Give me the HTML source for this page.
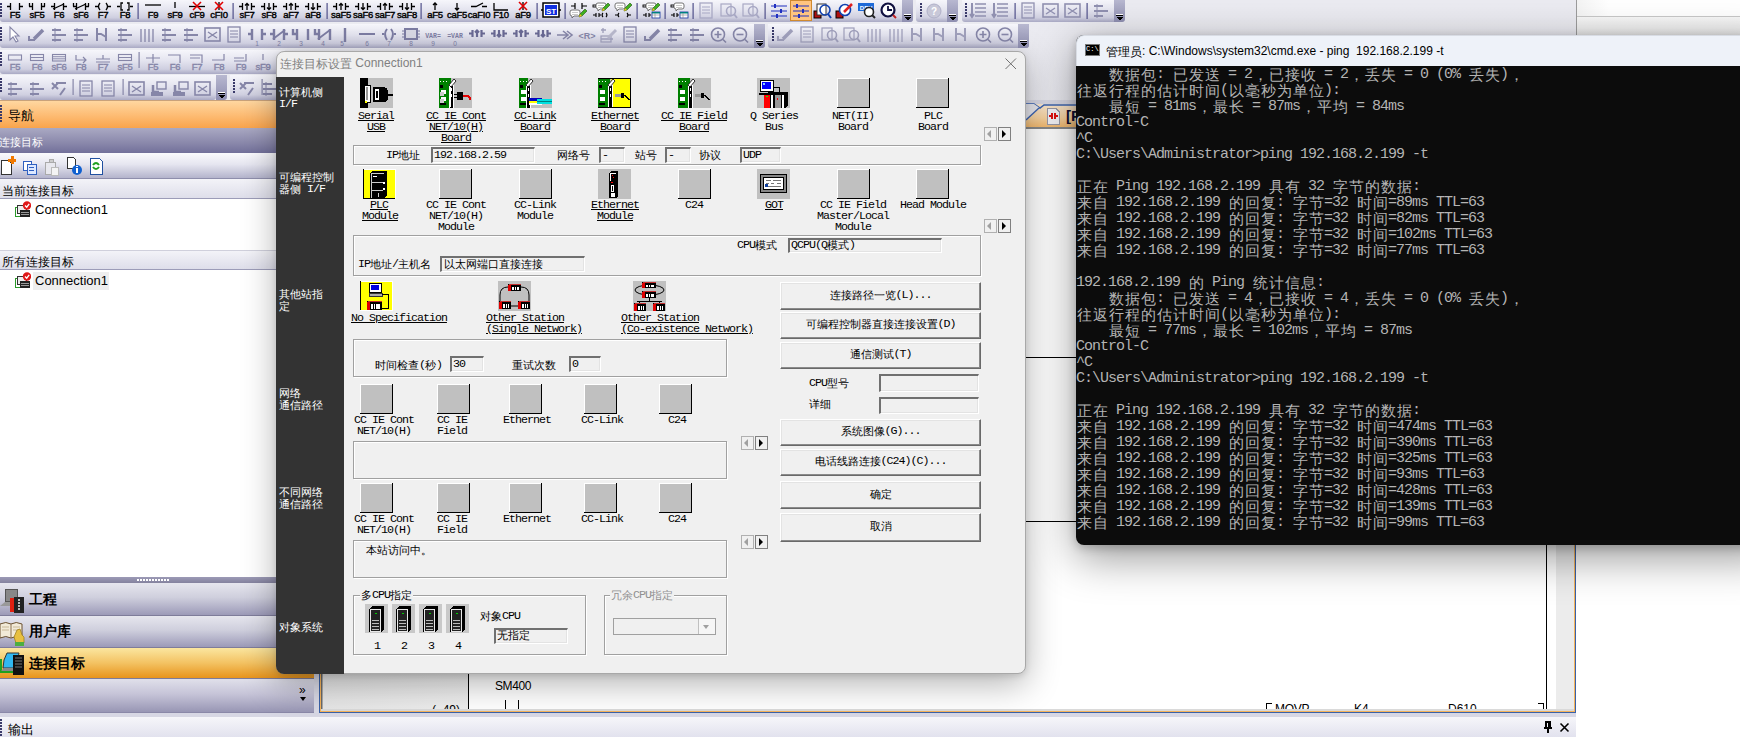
<!DOCTYPE html><html><head><meta charset="utf-8"><style>
*{margin:0;padding:0;box-sizing:border-box}
html,body{width:1740px;height:737px;overflow:hidden;background:#f4f4f6;font-family:"Liberation Sans",sans-serif}
div,span{position:absolute}
.tb{background:linear-gradient(#f6f6fb 0%,#e4e4ef 45%,#cfcfe0 80%,#a9a9c4 100%);border-radius:0 0 3px 3px}
.grip{background:linear-gradient(#b8b8d0,#8e8eb0)}
.m{font-family:"Liberation Mono",monospace}
.t{white-space:pre;line-height:11px;font-size:11.667px;letter-spacing:-1px;font-family:"Liberation Mono",monospace;color:#000}
.u{text-decoration:underline}
.gbox{border:1px solid #a0a0a0;box-shadow:1px 1px 0 #fff inset, 1px 1px 0 #fff}
.inp{background:#f0f0f0;border-top:2px solid #707070;border-left:2px solid #707070;border-right:1px solid #fff;border-bottom:1px solid #fff;box-shadow:inset -1px -1px 0 #e3e3e3}
.btn{background:#f0f0f0;border-top:1px solid #fff;border-left:1px solid #fff;border-right:1px solid #696969;border-bottom:1px solid #696969;box-shadow:inset -1px -1px 0 #8a8a8a,inset 1px 1px 0 #e3e3e3}
.ico{background:#c0c0c0;border-right:2px solid #000;border-bottom:2px solid #000}
.lbl{color:#fff;font-size:11.667px;line-height:12px;white-space:pre;font-family:"Liberation Mono",monospace;letter-spacing:-1px}
.cmd{color:#b4b4b4;font-family:"Liberation Mono",monospace;font-size:15px;line-height:16px;white-space:pre;letter-spacing:-1px}
i{font-style:normal;display:inline-block;position:relative;vertical-align:top;letter-spacing:0;text-align:center;white-space:nowrap;font-family:"Liberation Sans",sans-serif}
.k11{width:11px;font-size:11px}
.k16{width:16px;font-size:15px}
.cj{display:inline-block;position:relative;overflow:hidden;vertical-align:top;letter-spacing:1px;font-family:"Liberation Sans",sans-serif}
</style></head><body><div style="left:0px;top:0px;width:1576px;height:737px;background:linear-gradient(#ebebf1,#e6e6ee)"></div>
<div style="left:1576px;top:0px;width:164px;height:737px;background:#fff"></div>
<div style="left:1576px;top:0px;width:164px;height:17px;background:linear-gradient(90deg,#f3f3f3,#fff 20%,#fff)"></div>
<div style="left:1576px;top:16px;width:164px;height:1px;background:#c8c8c8"></div>
<div style="left:1576px;top:17px;width:164px;height:19px;background:linear-gradient(#f8f8f8,#e9e9e9)"></div>
<div style="left:1576px;top:35px;width:164px;height:1px;background:#b9b9b9"></div>
<div style="left:1576px;top:0px;width:1px;height:36px;background:#9c9c9c"></div>
<div class="tb" style="left:0px;top:0px;width:913px;height:22px;"></div>
<div class="grip" style="left:902px;top:0px;width:11px;height:22px;border-radius:0 0 3px 0"></div>
<div class="tb" style="left:916px;top:0px;width:42px;height:22px;"></div>
<div class="grip" style="left:947px;top:0px;width:11px;height:22px;border-radius:0 0 3px 0"></div>
<div class="tb" style="left:962px;top:0px;width:162px;height:22px;"></div>
<div class="grip" style="left:1114px;top:0px;width:11px;height:22px;border-radius:0 0 3px 0"></div>
<div class="tb" style="left:0px;top:24px;width:765px;height:24px;"></div>
<div class="grip" style="left:754px;top:24px;width:11px;height:24px;border-radius:0 0 3px 0"></div>
<div class="tb" style="left:768px;top:24px;width:261px;height:24px;"></div>
<div class="grip" style="left:1018px;top:24px;width:11px;height:24px;border-radius:0 0 3px 0"></div>
<div class="tb" style="left:0px;top:50px;width:285px;height:24px;"></div>
<div class="tb" style="left:0px;top:75px;width:216px;height:25px;"></div>
<div class="grip" style="left:216px;top:75px;width:11px;height:25px;border-radius:0 0 3px 0"></div>
<div class="tb" style="left:230px;top:75px;width:60px;height:25px;"></div>
<svg style="position:absolute;left:0;top:0" width="1130" height="101"><rect x="0" y="3" width="2" height="2" fill="#3a3a6a"/><rect x="0" y="6" width="2" height="2" fill="#3a3a6a"/><rect x="0" y="9" width="2" height="2" fill="#3a3a6a"/><rect x="0" y="12" width="2" height="2" fill="#3a3a6a"/><rect x="0" y="15" width="2" height="2" fill="#3a3a6a"/><path d="M7 6.5H10.5M10.5 3V10M19.5 3V10M19.5 6.5H23" stroke="#000" stroke-width="1.3" fill="none"/><text x="15" y="17.8" text-anchor="middle" font-size="9.5" font-weight="normal" fill="#000" stroke="#000" stroke-width="0.4" letter-spacing="-0.3" font-family="Liberation Sans">F5</text><path d="M29 6.5H32.5M32.5 3V10M41.5 3V10M41.5 6.5H45" stroke="#000" stroke-width="1.3" fill="none"/><path d="M29.5 3V6.5M44.5 3V6.5" stroke="#000" stroke-width="1.3" fill="none"/><text x="37" y="17.8" text-anchor="middle" font-size="9.5" font-weight="normal" fill="#000" stroke="#000" stroke-width="0.4" letter-spacing="-0.3" font-family="Liberation Sans">sF5</text><path d="M51 6.5H54.5M54.5 3V10M63.5 3V10M63.5 6.5H67" stroke="#000" stroke-width="1.3" fill="none"/><path d="M53 9L64 4" stroke="#000" stroke-width="1.3" fill="none"/><text x="59" y="17.8" text-anchor="middle" font-size="9.5" font-weight="normal" fill="#000" stroke="#000" stroke-width="0.4" letter-spacing="-0.3" font-family="Liberation Sans">F6</text><path d="M73 6.5H76.5M76.5 3V10M85.5 3V10M85.5 6.5H89" stroke="#000" stroke-width="1.3" fill="none"/><path d="M73.5 3V6.5M88.5 3V6.5" stroke="#000" stroke-width="1.3" fill="none"/><path d="M75 9L86 4" stroke="#000" stroke-width="1.3" fill="none"/><text x="81" y="17.8" text-anchor="middle" font-size="9.5" font-weight="normal" fill="#000" stroke="#000" stroke-width="0.4" letter-spacing="-0.3" font-family="Liberation Sans">sF6</text><path d="M95 6.5H98M100 3Q97 6.5 100 10M106 3Q109 6.5 106 10M108 6.5H111" stroke="#000" stroke-width="1.3" fill="none"/><text x="103" y="17.8" text-anchor="middle" font-size="9.5" font-weight="normal" fill="#000" stroke="#000" stroke-width="0.4" letter-spacing="-0.3" font-family="Liberation Sans">F7</text><path d="M117 6.5H120M123 3H121V10H123M127 3H129V10H127M130 6.5H133" stroke="#000" stroke-width="1.3" fill="none"/><text x="125" y="17.8" text-anchor="middle" font-size="9.5" font-weight="normal" fill="#000" stroke="#000" stroke-width="0.4" letter-spacing="-0.3" font-family="Liberation Sans">F8</text><rect x="137.5" y="3" width="1.2" height="16" fill="#50508a"/><path d="M145 5H161" stroke="#000" stroke-width="1.3" fill="none"/><text x="153" y="17.8" text-anchor="middle" font-size="9.5" font-weight="normal" fill="#000" stroke="#000" stroke-width="0.4" letter-spacing="-0.3" font-family="Liberation Sans">F9</text><path d="M175 2V8" stroke="#000" stroke-width="1.3" fill="none"/><text x="175" y="17.8" text-anchor="middle" font-size="9.5" font-weight="normal" fill="#000" stroke="#000" stroke-width="0.4" letter-spacing="-0.3" font-family="Liberation Sans">sF9</text><path d="M189 6.5H205" stroke="#000" stroke-width="1.3" fill="none"/><path d="M193 2L201 10M201 2L193 10" stroke="#e00000" stroke-width="1.6" fill="none"/><text x="197" y="17.8" text-anchor="middle" font-size="9.5" font-weight="normal" fill="#000" stroke="#000" stroke-width="0.4" letter-spacing="-0.3" font-family="Liberation Sans">cF9</text><path d="M219 2V10" stroke="#000" stroke-width="1.3" fill="none"/><path d="M215 2L223 10M223 2L215 10" stroke="#e00000" stroke-width="1.6" fill="none"/><text x="219" y="17.8" text-anchor="middle" font-size="9.5" font-weight="normal" fill="#000" stroke="#000" stroke-width="0.4" letter-spacing="-0.3" font-family="Liberation Sans">cFI0</text><rect x="232.5" y="3" width="1.2" height="16" fill="#50508a"/><path d="M239 6.5H242.5M242.5 3V10M251.5 3V10M251.5 6.5H255" stroke="#000" stroke-width="1.3" fill="none"/><path d="M247 10V3.5M245 5.5L247 3.5L249 5.5" stroke="#000" stroke-width="1.3" fill="none"/><text x="247" y="17.8" text-anchor="middle" font-size="9.5" font-weight="normal" fill="#000" stroke="#000" stroke-width="0.4" letter-spacing="-0.3" font-family="Liberation Sans">sF7</text><path d="M261 6.5H264.5M264.5 3V10M273.5 3V10M273.5 6.5H277" stroke="#000" stroke-width="1.3" fill="none"/><path d="M269 3V9.5M267 7.5L269 9.5L271 7.5" stroke="#000" stroke-width="1.3" fill="none"/><text x="269" y="17.8" text-anchor="middle" font-size="9.5" font-weight="normal" fill="#000" stroke="#000" stroke-width="0.4" letter-spacing="-0.3" font-family="Liberation Sans">sF8</text><path d="M283 6.5H286.5M286.5 3V10M295.5 3V10M295.5 6.5H299" stroke="#000" stroke-width="1.3" fill="none"/><path d="M291 10V3.5M289 5.5L291 3.5L293 5.5" stroke="#000" stroke-width="1.3" fill="none"/><text x="291" y="17.8" text-anchor="middle" font-size="9.5" font-weight="normal" fill="#000" stroke="#000" stroke-width="0.4" letter-spacing="-0.3" font-family="Liberation Sans">aF7</text><path d="M305 6.5H308.5M308.5 3V10M317.5 3V10M317.5 6.5H321" stroke="#000" stroke-width="1.3" fill="none"/><path d="M313 3V9.5M311 7.5L313 9.5L315 7.5" stroke="#000" stroke-width="1.3" fill="none"/><text x="313" y="17.8" text-anchor="middle" font-size="9.5" font-weight="normal" fill="#000" stroke="#000" stroke-width="0.4" letter-spacing="-0.3" font-family="Liberation Sans">aF8</text><rect x="326.5" y="3" width="1.2" height="16" fill="#50508a"/><path d="M333 6.5H336.5M336.5 3V10M345.5 3V10M345.5 6.5H349" stroke="#000" stroke-width="1.3" fill="none"/><path d="M341 10V3.5M339 5.5L341 3.5L343 5.5" stroke="#000" stroke-width="1.3" fill="none"/><text x="341" y="17.8" text-anchor="middle" font-size="9.5" font-weight="normal" fill="#000" stroke="#000" stroke-width="0.4" letter-spacing="-0.3" font-family="Liberation Sans">saF5</text><path d="M355 6.5H358.5M358.5 3V10M367.5 3V10M367.5 6.5H371" stroke="#000" stroke-width="1.3" fill="none"/><path d="M363 3V9.5M361 7.5L363 9.5L365 7.5" stroke="#000" stroke-width="1.3" fill="none"/><text x="363" y="17.8" text-anchor="middle" font-size="9.5" font-weight="normal" fill="#000" stroke="#000" stroke-width="0.4" letter-spacing="-0.3" font-family="Liberation Sans">saF6</text><path d="M377 6.5H380.5M380.5 3V10M389.5 3V10M389.5 6.5H393" stroke="#000" stroke-width="1.3" fill="none"/><path d="M385 10V3.5M383 5.5L385 3.5L387 5.5" stroke="#000" stroke-width="1.3" fill="none"/><text x="385" y="17.8" text-anchor="middle" font-size="9.5" font-weight="normal" fill="#000" stroke="#000" stroke-width="0.4" letter-spacing="-0.3" font-family="Liberation Sans">saF7</text><path d="M399 6.5H402.5M402.5 3V10M411.5 3V10M411.5 6.5H415" stroke="#000" stroke-width="1.3" fill="none"/><path d="M407 3V9.5M405 7.5L407 9.5L409 7.5" stroke="#000" stroke-width="1.3" fill="none"/><text x="407" y="17.8" text-anchor="middle" font-size="9.5" font-weight="normal" fill="#000" stroke="#000" stroke-width="0.4" letter-spacing="-0.3" font-family="Liberation Sans">saF8</text><rect x="420.5" y="3" width="1.2" height="16" fill="#50508a"/><path d="M435 10V3M433 5L435 3L437 5" stroke="#000" stroke-width="1.3" fill="none"/><text x="435" y="17.8" text-anchor="middle" font-size="9.5" font-weight="normal" fill="#000" stroke="#000" stroke-width="0.4" letter-spacing="-0.3" font-family="Liberation Sans">aF5</text><path d="M457 3V10M455 8L457 10L459 8" stroke="#000" stroke-width="1.3" fill="none"/><text x="457" y="17.8" text-anchor="middle" font-size="9.5" font-weight="normal" fill="#000" stroke="#000" stroke-width="0.4" letter-spacing="-0.3" font-family="Liberation Sans">caF5</text><path d="M471 6.5H476L483 3M482 6.5H487" stroke="#000" stroke-width="1.3" fill="none"/><text x="479" y="17.8" text-anchor="middle" font-size="9.5" font-weight="normal" fill="#000" stroke="#000" stroke-width="0.4" letter-spacing="-0.3" font-family="Liberation Sans">caFI0</text><path d="M494 3V10H508" stroke="#000" stroke-width="1.3" fill="none"/><text x="501" y="17.8" text-anchor="middle" font-size="9.5" font-weight="normal" fill="#000" stroke="#000" stroke-width="0.4" letter-spacing="-0.3" font-family="Liberation Sans">F10</text><path d="M523 2V10" stroke="#000" stroke-width="1.3" fill="none"/><path d="M519 2L527 10M527 2L519 10" stroke="#e00000" stroke-width="1.6" fill="none"/><text x="523" y="17.8" text-anchor="middle" font-size="9.5" font-weight="normal" fill="#000" stroke="#000" stroke-width="0.4" letter-spacing="-0.3" font-family="Liberation Sans">aF9</text><rect x="536.5" y="3" width="1.2" height="16" fill="#50508a"/><rect x="543" y="3" width="16" height="14" fill="#fff" stroke="#000" stroke-width="1.5"/><rect x="545" y="5" width="12" height="10" fill="#1030e0"/><text x="551" y="13.5" text-anchor="middle" font-size="8" font-weight="bold" fill="#fff" font-family="Liberation Sans">ST</text><path d="M541 10H543M559 10H561" stroke="#000" stroke-width="1.3" fill="none"/><rect x="564.5" y="3" width="1.2" height="16" fill="#50508a"/><rect x="790.5" y="0.5" width="21" height="20" fill="#ffc480" stroke="#d08a30"/><path d="M571 6H575M575 3V9M582 3V9M582 6H587" stroke="#000" stroke-width="1.2" fill="none"/><path d="M572 10H578Q580 10 580 12V14Q580 16 578 16H574L572 18V16Q570 16 570 14V12Q570 10 572 10Z" fill="#fff" stroke="#666" stroke-width="0.9"/><path d="M572 12.5H578M572 14.5H578" stroke="#bbb" stroke-width="0.8"/><path d="M579 17L580 14L585 9L587 11L582 16Z" fill="#40b020" stroke="#205010" stroke-width="0.6"/><path d="M579 17L580 14L582 16Z" fill="#f0c020"/><rect x="593" y="5" width="3" height="2" fill="none" stroke="#000" stroke-width="0.9"/><path d="M598 3H604Q606 3 606 5V7Q606 9 604 9H600L598 11V9Q596 9 596 7V5Q596 3 598 3Z" fill="#fff" stroke="#666" stroke-width="0.9"/><path d="M598 5.5H604M598 7.5H604" stroke="#bbb" stroke-width="0.8"/><path d="M602 11L603 8L608 3L610 5L605 10Z" fill="#40b020" stroke="#205010" stroke-width="0.6"/><path d="M602 11L603 8L605 10Z" fill="#f0c020"/><path d="M593 15H596M596 13V17M599 13V17M599 15H601" stroke="#000" stroke-width="1.1" fill="none"/><path d="M603 13Q601 15 603 17M606 13Q608 15 606 17" stroke="#000" stroke-width="1.1" fill="none"/><path d="M617 3H623Q625 3 625 5V7Q625 9 623 9H619L617 11V9Q615 9 615 7V5Q615 3 617 3Z" fill="#fff" stroke="#666" stroke-width="0.9"/><path d="M617 5.5H623M617 7.5H623" stroke="#bbb" stroke-width="0.8"/><path d="M624 11L625 8L630 3L632 5L627 10Z" fill="#40b020" stroke="#205010" stroke-width="0.6"/><path d="M624 11L625 8L627 10Z" fill="#f0c020"/><path d="M615 15H618M619 13Q617 15 619 17M627 13Q629 15 627 17M628 15H631" stroke="#000" stroke-width="1.1" fill="none"/><rect x="643" y="5" width="3" height="2" fill="none" stroke="#000" stroke-width="0.9"/><path d="M648 3H654Q656 3 656 5V7Q656 9 654 9H650L648 11V9Q646 9 646 7V5Q646 3 648 3Z" fill="#fff" stroke="#666" stroke-width="0.9"/><path d="M648 5.5H654M648 7.5H654" stroke="#bbb" stroke-width="0.8"/><path d="M652 11L653 8L658 3L660 5L655 10Z" fill="#40b020" stroke="#205010" stroke-width="0.6"/><path d="M652 11L653 8L655 10Z" fill="#f0c020"/><path d="M643 15H646M646 13V17M649 13V17M649 15H651" stroke="#000" stroke-width="1.1" fill="none"/><rect x="652" y="12" width="8" height="6" fill="#fff" stroke="#1030a0" stroke-width="0.8"/><rect x="652" y="12" width="8" height="1.5" fill="#008080"/><path d="M652 15H660M655 13V18" stroke="#888" stroke-width="0.6"/><rect x="671" y="5" width="3" height="2" fill="none" stroke="#000" stroke-width="0.9"/><path d="M676 3H682Q684 3 684 5V7Q684 9 682 9H678L676 11V9Q674 9 674 7V5Q674 3 676 3Z" fill="#fff" stroke="#666" stroke-width="0.9"/><path d="M676 5.5H682M676 7.5H682" stroke="#bbb" stroke-width="0.8"/><path d="M671 15H674M674 13V17M677 13V17M677 15H679" stroke="#000" stroke-width="1.1" fill="none"/><rect x="680" y="12" width="8" height="6" fill="#fff" stroke="#1030a0" stroke-width="0.8"/><rect x="680" y="12" width="8" height="1.5" fill="#008080"/><path d="M680 15H688M683 13V18" stroke="#888" stroke-width="0.6"/><rect x="636.5" y="3" width="1.2" height="16" fill="#50508a"/><rect x="664.5" y="3" width="1.2" height="16" fill="#50508a"/><rect x="692.5" y="3" width="1.2" height="16" fill="#50508a"/><rect x="700" y="3" width="12" height="15" fill="none" stroke="#a8a8c4" stroke-width="1.3"/><path d="M702 7H710M702 10H710M702 13H710" stroke="#a8a8c4" stroke-width="1" fill="none"/><rect x="721" y="4" width="10" height="12" fill="none" stroke="#a8a8c4" stroke-width="1.2"/><circle cx="731" cy="11" r="4.5" fill="none" stroke="#a8a8c4" stroke-width="1.6"/><path d="M734 14L737 18" stroke="#a8a8c4" stroke-width="2" fill="none"/><rect x="743" y="4" width="10" height="12" fill="none" stroke="#a8a8c4" stroke-width="1.2"/><circle cx="753" cy="11" r="4.5" fill="none" stroke="#a8a8c4" stroke-width="1.6"/><path d="M756 14L759 18" stroke="#a8a8c4" stroke-width="2" fill="none"/><rect x="764.5" y="3" width="1.2" height="16" fill="#50508a"/><path d="M771 6H787M771 11H787M771 16H787" stroke="#2030c0" stroke-width="1.2" fill="none"/><path d="M775 4V8M781 9V13M777 14V18" stroke="#2030c0" stroke-width="2" fill="none"/><path d="M793 6H809M793 11H809M793 16H809" stroke="#2030c0" stroke-width="1.2" fill="none"/><path d="M797 4V8M803 9V13M799 14V18" stroke="#2030c0" stroke-width="2" fill="none"/><rect x="814" y="11" width="7" height="7" fill="#b01010" stroke="#000"/><rect x="817" y="4" width="9" height="11" fill="#fff" stroke="#333"/><circle cx="825" cy="10" r="5" fill="none" stroke="#1040b0" stroke-width="1.6"/><path d="M828 14L831 18" stroke="#1040b0" stroke-width="2" fill="none"/><rect x="836" y="11" width="7" height="7" fill="#b01010" stroke="#000"/><circle cx="845" cy="10" r="5.5" fill="#fff" stroke="#1040b0" stroke-width="1.6"/><path d="M844 12L852 4" stroke="#e02020" stroke-width="2.5" fill="none"/><rect x="858" y="3" width="16" height="8" fill="#1e6ad8"/><text x="866" y="10" text-anchor="middle" font-size="6" font-weight="bold" fill="#fff" font-family="Liberation Sans">DEV</text><circle cx="869" cy="12" r="4.5" fill="#fff" stroke="#222" stroke-width="1.6"/><path d="M872 15L875 18" stroke="#222" stroke-width="2" fill="none"/><circle cx="888" cy="10" r="6.5" fill="#fff" stroke="#101040" stroke-width="2.2"/><path d="M888 6V10H892" stroke="#101040" stroke-width="1.8" fill="none"/><path d="M893 15L896 18" stroke="#c02020" stroke-width="2" fill="none"/><rect x="920" y="3" width="2" height="2" fill="#3a3a6a"/><rect x="920" y="6" width="2" height="2" fill="#3a3a6a"/><rect x="920" y="9" width="2" height="2" fill="#3a3a6a"/><rect x="920" y="12" width="2" height="2" fill="#3a3a6a"/><rect x="920" y="15" width="2" height="2" fill="#3a3a6a"/><circle cx="934" cy="11" r="7" fill="#c8c8d8" stroke="#b0b0c8"/><text x="934" y="15" text-anchor="middle" font-size="10" font-weight="bold" fill="#fff" font-family="Liberation Sans">?</text><rect x="965" y="3" width="2" height="2" fill="#3a3a6a"/><rect x="965" y="6" width="2" height="2" fill="#3a3a6a"/><rect x="965" y="9" width="2" height="2" fill="#3a3a6a"/><rect x="965" y="12" width="2" height="2" fill="#3a3a6a"/><rect x="965" y="15" width="2" height="2" fill="#3a3a6a"/><path d="M975 4H986M975 8H986M975 12H986M975 16H986" stroke="#9090b0" stroke-width="1.5" fill="none"/><path d="M972 3V17M970 14L972 17L974 14" stroke="#9090b0" stroke-width="2" fill="none"/><path d="M997 4H1008M997 8H1008M997 12H1008M997 16H1008" stroke="#9090b0" stroke-width="1.5" fill="none"/><path d="M994 3V17M992 14L994 17L996 14" stroke="#9090b0" stroke-width="2" fill="none"/><rect x="1022" y="3" width="12" height="15" fill="none" stroke="#9090b0" stroke-width="1.3"/><path d="M1024 7H1032M1024 10H1032M1024 13H1032" stroke="#9090b0" stroke-width="1" fill="none"/><rect x="1043" y="4" width="15" height="13" fill="none" stroke="#9090b0" stroke-width="1.6"/><path d="M1046 8L1055 14M1055 8L1046 14" stroke="#9090b0" stroke-width="1.4" fill="none"/><rect x="1065" y="4" width="15" height="13" fill="none" stroke="#9090b0" stroke-width="1.6"/><path d="M1068 8L1077 14M1077 8L1068 14" stroke="#9090b0" stroke-width="1.4" fill="none"/><path d="M1094 6H1103M1094 11H1108M1094 16H1103" stroke="#9090b0" stroke-width="2.2" fill="none"/><path d="M1097 4V18" stroke="#9090b0" stroke-width="1" fill="none"/><rect x="1014.5" y="3" width="1.2" height="16" fill="#50508a"/><rect x="1086.5" y="3" width="1.2" height="16" fill="#50508a"/><rect x="0" y="27" width="2" height="2" fill="#3a3a6a"/><rect x="0" y="30" width="2" height="2" fill="#3a3a6a"/><rect x="0" y="33" width="2" height="2" fill="#3a3a6a"/><rect x="0" y="36" width="2" height="2" fill="#3a3a6a"/><rect x="0" y="39" width="2" height="2" fill="#3a3a6a"/><path d="M10 27L10 40L13 37L16 42L18 41L15 36L19 36Z" fill="#fff" stroke="#8686a8" stroke-width="1.1"/><path d="M29 36V40H35" stroke="#8686a8" stroke-width="2" fill="none"/><path d="M34 39L43 30" stroke="#8686a8" stroke-width="3.5" fill="none"/><path d="M52 30H61M52 35H66M52 40H61" stroke="#8686a8" stroke-width="2.2" fill="none"/><path d="M55 28V42" stroke="#8686a8" stroke-width="1" fill="none"/><path d="M74 30H83M74 35H88M74 40H83" stroke="#8686a8" stroke-width="2.2" fill="none"/><path d="M77 28V42" stroke="#8686a8" stroke-width="1" fill="none"/><path d="M97 28V41M97 34H101L106 37M106 28V41" stroke="#8686a8" stroke-width="2" fill="none"/><path d="M118 30H127M118 35H132M118 40H127" stroke="#8686a8" stroke-width="2.2" fill="none"/><path d="M121 28V42" stroke="#8686a8" stroke-width="1" fill="none"/><path d="M141 29V42M145 29V42M149 29V42M153 29V42" stroke="#8686a8" stroke-width="1.3" fill="none"/><path d="M162 30H171M162 35H176M162 40H171" stroke="#8686a8" stroke-width="2.2" fill="none"/><path d="M165 28V42" stroke="#8686a8" stroke-width="1" fill="none"/><path d="M184 30H193M184 35H198M184 40H193" stroke="#8686a8" stroke-width="2.2" fill="none"/><path d="M187 28V42" stroke="#8686a8" stroke-width="1" fill="none"/><rect x="205" y="28" width="15" height="13" fill="none" stroke="#8686a8" stroke-width="1.6"/><path d="M208 32L217 38M217 32L208 38" stroke="#8686a8" stroke-width="1.4" fill="none"/><rect x="228" y="27" width="12" height="15" fill="none" stroke="#8686a8" stroke-width="1.3"/><path d="M230 31H238M230 34H238M230 37H238" stroke="#8686a8" stroke-width="1" fill="none"/><path d="M248 34H252M252 29V40M262 29V40M262 34H266" stroke="#7c7ca2" stroke-width="2.4" fill="none"/><path d="M270 34H274M274 29V40M284 29V40M284 34H288" stroke="#7c7ca2" stroke-width="2.4" fill="none"/><path d="M273 39L285 30" stroke="#7c7ca2" stroke-width="1.8" fill="none"/><path d="M293 29V34H297M297 29V40M308 29V40" stroke="#7c7ca2" stroke-width="2.4" fill="none"/><path d="M315 29V34H319M319 29V40M330 29V40" stroke="#7c7ca2" stroke-width="2.4" fill="none"/><path d="M318 39L330 30" stroke="#7c7ca2" stroke-width="1.8" fill="none"/><path d="M345 28V42" stroke="#7c7ca2" stroke-width="2.4" fill="none"/><path d="M359 34H375" stroke="#7c7ca2" stroke-width="2" fill="none"/><path d="M382 34H384M387 29Q383 34 387 40M391 29Q395 34 391 40M394 34H396" stroke="#7c7ca2" stroke-width="2" fill="none"/><text x="257" y="46" text-anchor="middle" font-size="6.5" fill="#7c7ca2" font-family="Liberation Sans">1</text><text x="279" y="46" text-anchor="middle" font-size="6.5" fill="#7c7ca2" font-family="Liberation Sans">2</text><text x="301" y="46" text-anchor="middle" font-size="6.5" fill="#7c7ca2" font-family="Liberation Sans">3</text><text x="323" y="46" text-anchor="middle" font-size="6.5" fill="#7c7ca2" font-family="Liberation Sans">4</text><text x="342" y="46" text-anchor="middle" font-size="6.5" fill="#7c7ca2" font-family="Liberation Sans">5</text><text x="367" y="46" text-anchor="middle" font-size="6.5" fill="#7c7ca2" font-family="Liberation Sans">6</text><text x="389" y="46" text-anchor="middle" font-size="6.5" fill="#7c7ca2" font-family="Liberation Sans">7</text><text x="411" y="46" text-anchor="middle" font-size="6.5" fill="#7c7ca2" font-family="Liberation Sans">8</text><text x="433" y="46" text-anchor="middle" font-size="6.5" fill="#7c7ca2" font-family="Liberation Sans">9</text><text x="455" y="46" text-anchor="middle" font-size="6.5" fill="#7c7ca2" font-family="Liberation Sans">0</text><rect x="405" y="29" width="12" height="10" fill="#d8d8e4" stroke="#7c7ca2" stroke-width="2"/><path d="M402 31H405M402 34H405M402 37H405M417 31H420M417 34H420M417 37H420" stroke="#7c7ca2" stroke-width="1.2" fill="none"/><text x="433" y="38" text-anchor="middle" font-size="6.5" font-weight="bold" fill="#7c7ca2" font-family="Liberation Mono">VAR=</text><text x="455" y="38" text-anchor="middle" font-size="6.5" font-weight="bold" fill="#7c7ca2" font-family="Liberation Mono">=VAR</text><path d="M469 33.5H472.5M472.5 30V37M481.5 30V37M481.5 33.5H485" stroke="#6a6a94" stroke-width="2.2" fill="none"/><path d="M477 37V30.5M475 32.5L477 30.5L479 32.5" stroke="#6a6a94" stroke-width="2.2" fill="none"/><path d="M491 33.5H494.5M494.5 30V37M503.5 30V37M503.5 33.5H507" stroke="#6a6a94" stroke-width="2.2" fill="none"/><path d="M499 30V36.5M497 34.5L499 36.5L501 34.5" stroke="#6a6a94" stroke-width="2.2" fill="none"/><path d="M513 33.5H516.5M516.5 30V37M525.5 30V37M525.5 33.5H529" stroke="#6a6a94" stroke-width="2.2" fill="none"/><path d="M521 37V30.5M519 32.5L521 30.5L523 32.5" stroke="#6a6a94" stroke-width="2.2" fill="none"/><path d="M535 33.5H538.5M538.5 30V37M547.5 30V37M547.5 33.5H551" stroke="#6a6a94" stroke-width="2.2" fill="none"/><path d="M543 30V36.5M541 34.5L543 36.5L545 34.5" stroke="#6a6a94" stroke-width="2.2" fill="none"/><path d="M557 35H567M563 31L568 35L563 39M567 31L572 35L567 39" stroke="#8686a8" stroke-width="1.6" fill="none"/><text x="587" y="39" text-anchor="middle" font-size="9" font-weight="bold" fill="#8686a8" font-family="Liberation Sans">&lt;R&gt;</text><path d="M601 30H606M603 28V33M601 39H613" stroke="#a0a0bc" stroke-width="1.3" fill="none"/><rect x="601" y="36" width="10" height="6" fill="none" stroke="#a0a0bc" stroke-width="1.2"/><path d="M608 38L616 30" stroke="#b8b8cc" stroke-width="3" fill="none"/><rect x="624" y="27" width="12" height="15" fill="none" stroke="#8686a8" stroke-width="1.3"/><path d="M626 31H634M626 34H634M626 37H634" stroke="#8686a8" stroke-width="1" fill="none"/><path d="M645 36V40H651" stroke="#8686a8" stroke-width="2" fill="none"/><path d="M650 39L659 30" stroke="#8686a8" stroke-width="3.5" fill="none"/><path d="M668 30H677M668 35H682M668 40H677" stroke="#8686a8" stroke-width="2.2" fill="none"/><path d="M671 28V42" stroke="#8686a8" stroke-width="1" fill="none"/><path d="M690 30H699M690 35H704M690 40H699" stroke="#8686a8" stroke-width="2.2" fill="none"/><path d="M693 28V42" stroke="#8686a8" stroke-width="1" fill="none"/><circle cx="718" cy="34.5" r="6.5" fill="none" stroke="#8686a8" stroke-width="1.6"/><path d="M714.5 34.5H721.5M718 31V38" stroke="#8686a8" stroke-width="1.6" fill="none"/><path d="M723 39.5L726 42.5" stroke="#8686a8" stroke-width="1.6" fill="none"/><circle cx="740" cy="34.5" r="6.5" fill="none" stroke="#8686a8" stroke-width="1.6"/><path d="M736.5 34.5H743.5" stroke="#8686a8" stroke-width="1.6" fill="none"/><path d="M745 39.5L748 42.5" stroke="#8686a8" stroke-width="1.6" fill="none"/><rect x="772" y="27" width="2" height="2" fill="#3a3a6a"/><rect x="772" y="30" width="2" height="2" fill="#3a3a6a"/><rect x="772" y="33" width="2" height="2" fill="#3a3a6a"/><rect x="772" y="36" width="2" height="2" fill="#3a3a6a"/><rect x="772" y="39" width="2" height="2" fill="#3a3a6a"/><path d="M778 36V40H784" stroke="#a0a0bc" stroke-width="2" fill="none"/><path d="M783 39L792 30" stroke="#a0a0bc" stroke-width="3.5" fill="none"/><rect x="801" y="27" width="12" height="15" fill="none" stroke="#a0a0bc" stroke-width="1.3"/><path d="M803 31H811M803 34H811M803 37H811" stroke="#a0a0bc" stroke-width="1" fill="none"/><rect x="822" y="28" width="10" height="12" fill="none" stroke="#a0a0bc" stroke-width="1.2"/><circle cx="832" cy="35" r="4.5" fill="none" stroke="#a0a0bc" stroke-width="1.6"/><path d="M835 38L838 42" stroke="#a0a0bc" stroke-width="2" fill="none"/><rect x="844" y="28" width="10" height="12" fill="none" stroke="#a0a0bc" stroke-width="1.2"/><circle cx="854" cy="35" r="4.5" fill="none" stroke="#a0a0bc" stroke-width="1.6"/><path d="M857 38L860 42" stroke="#a0a0bc" stroke-width="2" fill="none"/><path d="M868 29V42M872 29V42M876 29V42M880 29V42" stroke="#a0a0bc" stroke-width="1.3" fill="none"/><path d="M890 29V42M894 29V42M898 29V42M902 29V42" stroke="#a0a0bc" stroke-width="1.3" fill="none"/><path d="M912 28V41M912 34H916L921 37M921 28V41" stroke="#a0a0bc" stroke-width="2" fill="none"/><path d="M934 28V41M934 34H938L943 37M943 28V41" stroke="#a0a0bc" stroke-width="2" fill="none"/><path d="M956 28V41M956 34H960L965 37M965 28V41" stroke="#a0a0bc" stroke-width="2" fill="none"/><circle cx="983" cy="34.5" r="6.5" fill="none" stroke="#8686a8" stroke-width="1.6"/><path d="M979.5 34.5H986.5M983 31V38" stroke="#8686a8" stroke-width="1.6" fill="none"/><path d="M988 39.5L991 42.5" stroke="#8686a8" stroke-width="1.6" fill="none"/><circle cx="1005" cy="34.5" r="6.5" fill="none" stroke="#8686a8" stroke-width="1.6"/><path d="M1001.5 34.5H1008.5" stroke="#8686a8" stroke-width="1.6" fill="none"/><path d="M1010 39.5L1013 42.5" stroke="#8686a8" stroke-width="1.6" fill="none"/><rect x="0" y="52" width="2" height="2" fill="#3a3a6a"/><rect x="0" y="55" width="2" height="2" fill="#3a3a6a"/><rect x="0" y="58" width="2" height="2" fill="#3a3a6a"/><rect x="0" y="61" width="2" height="2" fill="#3a3a6a"/><rect x="0" y="64" width="2" height="2" fill="#3a3a6a"/><rect x="8.5" y="55" width="13" height="5" fill="none" stroke="#8686a8" stroke-width="1.1"/><text x="15" y="70.3" text-anchor="middle" font-size="9.5" font-weight="normal" fill="#8686a8" stroke="#8686a8" stroke-width="0.4" letter-spacing="-0.3" font-family="Liberation Sans">F5</text><rect x="30.5" y="54.5" width="13" height="6" fill="none" stroke="#8686a8" stroke-width="1.1"/><path d="M30.5 57.5H43.5" stroke="#8686a8" stroke-width="1" fill="none"/><text x="37" y="70.3" text-anchor="middle" font-size="9.5" font-weight="normal" fill="#8686a8" stroke="#8686a8" stroke-width="0.4" letter-spacing="-0.3" font-family="Liberation Sans">F6</text><rect x="52.5" y="54.5" width="13" height="6.5" fill="none" stroke="#8686a8" stroke-width="1.1"/><path d="M52.5 56.7H65.5M52.5 58.8H65.5" stroke="#8686a8" stroke-width="0.9" fill="none"/><text x="59" y="70.3" text-anchor="middle" font-size="9.5" font-weight="normal" fill="#8686a8" stroke="#8686a8" stroke-width="0.4" letter-spacing="-0.3" font-family="Liberation Sans">sF6</text><path d="M76 55V60H86M83 57L86 60L83 63" stroke="#8686a8" stroke-width="1.2" fill="none"/><text x="81" y="70.3" text-anchor="middle" font-size="9.5" font-weight="normal" fill="#8686a8" stroke="#8686a8" stroke-width="0.4" letter-spacing="-0.3" font-family="Liberation Sans">F8</text><path d="M103 55V59M96 59H110M96 62H110" stroke="#8686a8" stroke-width="1.2" fill="none"/><text x="103" y="70.3" text-anchor="middle" font-size="9.5" font-weight="normal" fill="#8686a8" stroke="#8686a8" stroke-width="0.4" letter-spacing="-0.3" font-family="Liberation Sans">F7</text><rect x="118.5" y="54.5" width="13" height="6" fill="none" stroke="#8686a8" stroke-width="1.1"/><path d="M118.5 57.5H131.5" stroke="#8686a8" stroke-width="1" fill="none"/><text x="125" y="70.3" text-anchor="middle" font-size="9.5" font-weight="normal" fill="#8686a8" stroke="#8686a8" stroke-width="0.4" letter-spacing="-0.3" font-family="Liberation Sans">sF5</text><path d="M146 58H160M153 54V63" stroke="#8686a8" stroke-width="1.2" fill="none"/><text x="153" y="70.3" text-anchor="middle" font-size="9.5" font-weight="normal" fill="#8686a8" stroke="#8686a8" stroke-width="0.4" letter-spacing="-0.3" font-family="Liberation Sans">F5</text><path d="M168 55H180V63" stroke="#8686a8" stroke-width="1.2" fill="none"/><text x="175" y="70.3" text-anchor="middle" font-size="9.5" font-weight="normal" fill="#8686a8" stroke="#8686a8" stroke-width="0.4" letter-spacing="-0.3" font-family="Liberation Sans">F6</text><path d="M190 55H202V63M190 58H200" stroke="#8686a8" stroke-width="1.2" fill="none"/><text x="197" y="70.3" text-anchor="middle" font-size="9.5" font-weight="normal" fill="#8686a8" stroke="#8686a8" stroke-width="0.4" letter-spacing="-0.3" font-family="Liberation Sans">F7</text><path d="M224 54V60H212" stroke="#8686a8" stroke-width="1.2" fill="none"/><text x="219" y="70.3" text-anchor="middle" font-size="9.5" font-weight="normal" fill="#8686a8" stroke="#8686a8" stroke-width="0.4" letter-spacing="-0.3" font-family="Liberation Sans">F8</text><path d="M246 54V61H234M234 58H244" stroke="#8686a8" stroke-width="1.2" fill="none"/><text x="241" y="70.3" text-anchor="middle" font-size="9.5" font-weight="normal" fill="#8686a8" stroke="#8686a8" stroke-width="0.4" letter-spacing="-0.3" font-family="Liberation Sans">F9</text><path d="M263 54V60" stroke="#8686a8" stroke-width="1.2" fill="none"/><text x="263" y="70.3" text-anchor="middle" font-size="9.5" font-weight="normal" fill="#8686a8" stroke="#8686a8" stroke-width="0.4" letter-spacing="-0.3" font-family="Liberation Sans">sF9</text><rect x="138.5" y="52" width="1.2" height="16" fill="#8686a8"/><rect x="0" y="78" width="2" height="2" fill="#3a3a6a"/><rect x="0" y="81" width="2" height="2" fill="#3a3a6a"/><rect x="0" y="84" width="2" height="2" fill="#3a3a6a"/><rect x="0" y="87" width="2" height="2" fill="#3a3a6a"/><rect x="0" y="90" width="2" height="2" fill="#3a3a6a"/><path d="M8 84H17M8 89H22M8 94H17" stroke="#8686a8" stroke-width="2.2" fill="none"/><path d="M11 82V96" stroke="#8686a8" stroke-width="1" fill="none"/><path d="M30 84H39M30 89H44M30 94H39" stroke="#8686a8" stroke-width="2.2" fill="none"/><path d="M33 82V96" stroke="#8686a8" stroke-width="1" fill="none"/><path d="M52 83L58 89M58 83L52 89M56 83H66M60 95L65 88" stroke="#8686a8" stroke-width="2" fill="none"/><rect x="80" y="81" width="12" height="15" fill="none" stroke="#8686a8" stroke-width="1.3"/><path d="M82 85H90M82 88H90M82 91H90" stroke="#8686a8" stroke-width="1" fill="none"/><rect x="102" y="81" width="12" height="15" fill="none" stroke="#8686a8" stroke-width="1.3"/><path d="M104 85H112M104 88H112M104 91H112" stroke="#8686a8" stroke-width="1" fill="none"/><rect x="129" y="82" width="15" height="13" fill="none" stroke="#8686a8" stroke-width="1.6"/><path d="M132 86L141 92M141 86L132 92" stroke="#8686a8" stroke-width="1.4" fill="none"/><rect x="157" y="82" width="9" height="7" fill="none" stroke="#8686a8" stroke-width="1.4"/><path d="M153 85V92H159" stroke="#8686a8" stroke-width="2.5" fill="none"/><rect x="151" y="92" width="12" height="4" fill="#8686a8"/><rect x="179" y="82" width="9" height="7" fill="none" stroke="#8686a8" stroke-width="1.4"/><path d="M175 85V92H181" stroke="#8686a8" stroke-width="2.5" fill="none"/><rect x="173" y="92" width="12" height="4" fill="#8686a8"/><rect x="195" y="82" width="15" height="13" fill="none" stroke="#8686a8" stroke-width="1.6"/><path d="M198 86L207 92M207 86L198 92" stroke="#8686a8" stroke-width="1.4" fill="none"/><path d="M240 83L246 89M246 83L240 89M244 83H254M248 95L253 88" stroke="#8686a8" stroke-width="2" fill="none"/><path d="M263 84H272M263 89H277M263 94H272" stroke="#8686a8" stroke-width="2.2" fill="none"/><path d="M266 82V96" stroke="#8686a8" stroke-width="1" fill="none"/><rect x="72.5" y="79" width="1.2" height="16" fill="#8686a8"/><rect x="122.5" y="79" width="1.2" height="16" fill="#8686a8"/><rect x="261.5" y="79" width="1.2" height="16" fill="#8686a8"/><rect x="233" y="79" width="2" height="2" fill="#3a3a6a"/><rect x="233" y="82" width="2" height="2" fill="#3a3a6a"/><rect x="233" y="85" width="2" height="2" fill="#3a3a6a"/><rect x="233" y="88" width="2" height="2" fill="#3a3a6a"/><rect x="233" y="91" width="2" height="2" fill="#3a3a6a"/></svg>
<svg style="position:absolute;left:904px;top:14px" width="8" height="7" shape-rendering="crispEdges"><rect x="0" y="0" width="7" height="1" fill="#fff"/><rect x="0" y="1" width="7" height="1" fill="#000"/><path d="M0 3H7L3.5 6.5Z" fill="#000"/><rect x="1" y="7" width="5" height="0" fill="#fff"/></svg>
<svg style="position:absolute;left:949px;top:14px" width="8" height="7" shape-rendering="crispEdges"><rect x="0" y="0" width="7" height="1" fill="#fff"/><rect x="0" y="1" width="7" height="1" fill="#000"/><path d="M0 3H7L3.5 6.5Z" fill="#000"/><rect x="1" y="7" width="5" height="0" fill="#fff"/></svg>
<svg style="position:absolute;left:1116px;top:14px" width="8" height="7" shape-rendering="crispEdges"><rect x="0" y="0" width="7" height="1" fill="#fff"/><rect x="0" y="1" width="7" height="1" fill="#000"/><path d="M0 3H7L3.5 6.5Z" fill="#000"/><rect x="1" y="7" width="5" height="0" fill="#fff"/></svg>
<svg style="position:absolute;left:756px;top:40px" width="8" height="7" shape-rendering="crispEdges"><rect x="0" y="0" width="7" height="1" fill="#fff"/><rect x="0" y="1" width="7" height="1" fill="#000"/><path d="M0 3H7L3.5 6.5Z" fill="#000"/><rect x="1" y="7" width="5" height="0" fill="#fff"/></svg>
<svg style="position:absolute;left:1020px;top:40px" width="8" height="7" shape-rendering="crispEdges"><rect x="0" y="0" width="7" height="1" fill="#fff"/><rect x="0" y="1" width="7" height="1" fill="#000"/><path d="M0 3H7L3.5 6.5Z" fill="#000"/><rect x="1" y="7" width="5" height="0" fill="#fff"/></svg>
<svg style="position:absolute;left:218px;top:92px" width="8" height="7" shape-rendering="crispEdges"><rect x="0" y="0" width="7" height="1" fill="#fff"/><rect x="0" y="1" width="7" height="1" fill="#000"/><path d="M0 3H7L3.5 6.5Z" fill="#000"/><rect x="1" y="7" width="5" height="0" fill="#fff"/></svg>
<div style="left:0px;top:100px;width:314px;height:28px;background:linear-gradient(#ffd7a0,#fdbb72 55%,#f9a44c);border-top:1px solid #c9a27a"></div>
<div style="left:8px;top:107px;font-size:13px;color:#000">导航</div>
<svg style="position:absolute;left:0;top:104px" width="4" height="20"><rect x="0" y="1" width="2" height="2" fill="#3a3a6a"/><rect x="0" y="4" width="2" height="2" fill="#3a3a6a"/><rect x="0" y="7" width="2" height="2" fill="#3a3a6a"/><rect x="0" y="10" width="2" height="2" fill="#3a3a6a"/><rect x="0" y="13" width="2" height="2" fill="#3a3a6a"/><rect x="0" y="16" width="2" height="2" fill="#3a3a6a"/></svg>
<div style="left:0px;top:128px;width:314px;height:25px;background:linear-gradient(#aaa9c3,#8a88ab 60%,#72709a)"></div>
<div style="left:-1px;top:135px;font-size:11px;color:#fff">连接目标</div>
<div style="left:0px;top:153px;width:314px;height:26px;background:linear-gradient(#fafafd,#e6e6f0 45%,#b4b4cc);border-bottom:1px solid #8e8eac"></div>
<svg style="position:absolute;left:0;top:155px" width="110" height="22" shape-rendering="crispEdges"><path d="M1 5H8L11 8V19H1Z" fill="#fff" stroke="#333"/><path d="M12 1V9M8 5H16" stroke="#f07800" stroke-width="3"/><rect x="23" y="6" width="8" height="9" fill="#fff" stroke="#3060c0"/><rect x="27" y="9" width="9" height="10" fill="#dde8ff" stroke="#3060c0"/><path d="M29 12H34M29 15H34" stroke="#3060c0"/><rect x="45" y="7" width="10" height="12" fill="#e8e8ee" stroke="#aaa"/><rect x="49" y="4" width="4" height="3" fill="#ccc" stroke="#aaa"/><rect x="51" y="12" width="7" height="8" fill="#f4f4f4" stroke="#bbb"/><path d="M67 2H73L75 4V13H67Z" fill="#fff" stroke="#333"/><circle cx="77" cy="15" r="5" fill="#1060d0" shape-rendering="auto"/><rect x="76" y="13" width="2" height="5" fill="#fff"/><rect x="76" y="11" width="2" height="1" fill="#fff"/><path d="M90 3H99L102 6V19H90Z" fill="#fff" stroke="#2050a0"/><path d="M93 10Q96 6 99 10M99 12Q96 16 93 12" stroke="#20a020" stroke-width="2" fill="none" shape-rendering="auto"/></svg>
<div style="left:0px;top:179px;width:314px;height:20px;background:linear-gradient(#f3f3f8,#dedeea);border-bottom:1px solid #9c9cb8"></div>
<div style="left:2px;top:183px;font-size:12px;color:#000"><i style="width:12px">当</i><i style="width:12px">前</i><i style="width:12px">连</i><i style="width:12px">接</i><i style="width:12px">目</i><i style="width:12px">标</i></div>
<div style="left:0px;top:199px;width:314px;height:51px;background:#fff"></div>
<div style="left:0px;top:250px;width:314px;height:20px;background:linear-gradient(#f3f3f8,#dedeea);border-top:1px solid #d0d0dc;border-bottom:1px solid #9c9cb8"></div>
<div style="left:2px;top:254px;font-size:12px;color:#000"><i style="width:12px">所</i><i style="width:12px">有</i><i style="width:12px">连</i><i style="width:12px">接</i><i style="width:12px">目</i><i style="width:12px">标</i></div>
<div style="left:0px;top:270px;width:314px;height:307px;background:#fff"></div>
<div style="left:33px;top:272px;width:76px;height:18px;background:#eeeeee"></div>
<svg style="position:absolute;left:15px;top:201px" width="16" height="17" shape-rendering="crispEdges"><rect x="0.5" y="6.5" width="10" height="9" fill="none" stroke="#2a9a2a"/><rect x="2.5" y="4.5" width="9" height="8" fill="#eee" stroke="#333"/><rect x="5" y="9" width="10" height="7" fill="#222"/><path d="M6 11H14M6 13H14" stroke="#999"/><circle cx="12" cy="4.5" r="4.2" fill="#e01818" shape-rendering="auto"/><path d="M10 4.5L11.7 6.2L14.2 2.8" stroke="#fff" stroke-width="1.3" fill="none" shape-rendering="auto"/></svg>
<div style="left:35px;top:202px;font-size:13px;color:#000">Connection1</div>
<svg style="position:absolute;left:15px;top:272px" width="16" height="17" shape-rendering="crispEdges"><rect x="0.5" y="6.5" width="10" height="9" fill="none" stroke="#2a9a2a"/><rect x="2.5" y="4.5" width="9" height="8" fill="#eee" stroke="#333"/><rect x="5" y="9" width="10" height="7" fill="#222"/><path d="M6 11H14M6 13H14" stroke="#999"/><circle cx="12" cy="4.5" r="4.2" fill="#e01818" shape-rendering="auto"/><path d="M10 4.5L11.7 6.2L14.2 2.8" stroke="#fff" stroke-width="1.3" fill="none" shape-rendering="auto"/></svg>
<div style="left:35px;top:273px;font-size:13px;color:#000">Connection1</div>
<div style="left:0px;top:577px;width:314px;height:6px;background:linear-gradient(#9c9ab6,#84829e)"></div>
<svg style="position:absolute;left:137px;top:578px" width="34" height="4"><rect x="0" y="1" width="2" height="2" fill="#fff"/><rect x="3" y="1" width="2" height="2" fill="#fff"/><rect x="6" y="1" width="2" height="2" fill="#fff"/><rect x="9" y="1" width="2" height="2" fill="#fff"/><rect x="12" y="1" width="2" height="2" fill="#fff"/><rect x="15" y="1" width="2" height="2" fill="#fff"/><rect x="18" y="1" width="2" height="2" fill="#fff"/><rect x="21" y="1" width="2" height="2" fill="#fff"/><rect x="24" y="1" width="2" height="2" fill="#fff"/><rect x="27" y="1" width="2" height="2" fill="#fff"/><rect x="30" y="1" width="2" height="2" fill="#fff"/></svg>
<div style="left:0px;top:583px;width:314px;height:33px;background:linear-gradient(#e6e6ee,#cfcfdd 45%,#9c9ab8);border-bottom:1px solid #7e7c9a"></div>
<div style="left:29px;top:591px;font-size:14px;font-weight:bold;color:#000">工程</div>
<div style="left:0px;top:616px;width:314px;height:32px;background:linear-gradient(#e6e6ee,#cfcfdd 45%,#9c9ab8);border-bottom:1px solid #7e7c9a"></div>
<div style="left:29px;top:623px;font-size:14px;font-weight:bold;color:#000">用户库</div>
<div style="left:0px;top:648px;width:314px;height:31px;background:linear-gradient(#fbe6a0,#f3c262 50%,#e8941c);border-bottom:1px solid #7e7c9a"></div>
<div style="left:29px;top:655px;font-size:14px;font-weight:bold;color:#000">连接目标</div>
<div style="left:0px;top:679px;width:315px;height:34px;background:linear-gradient(#e0e0ea,#c6c4d8 45%,#9896b4);border-right:1px solid #8a88a8;border-bottom:1px solid #8a88a8"></div>
<div style="left:299px;top:683px;font-size:12px;color:#000">»</div>
<div style="left:300px;top:697px;width:0;height:0;border-top:4px solid #000;border-left:3px solid transparent;border-right:3px solid transparent"></div>
<svg style="position:absolute;left:0;top:587px" width="26" height="90"><path d="M5 2H18V15H5Z" fill="#555"/><path d="M6 3H17V14H6Z" fill="#888"/><path d="M0 19L5 15H18L14 19Z" fill="#999"/><rect x="10" y="11" width="4" height="14" fill="#e02010"/><rect x="14" y="10" width="10" height="16" fill="#222"/><path d="M19 12V24" stroke="#bbb" stroke-width="2" stroke-dasharray="2 1"/><path d="M0 37Q6 34 11 37Q16 34 22 37V51Q16 48 11 51Q6 48 0 51Z" fill="#f2ead8" stroke="#6a5030"/><path d="M11 37V51" stroke="#8a7050"/><path d="M2 40H9M2 43H9M13 40H20M13 43H20" stroke="#c8b898"/><path d="M17 43L20 42L22 48L24 50V56H16L14 50Z" fill="#e8c040" stroke="#a08020" stroke-width="0.8"/><rect x="15" y="55" width="9" height="4" fill="#4cae40"/><path d="M1 72V85H14" stroke="#20a020" stroke-width="2" fill="none"/><path d="M4 73L7 66H19L16 81H3Z" fill="#30b8f0" stroke="#333"/><path d="M1 84L4 81H15L13 84Z" fill="#888"/><rect x="13" y="68" width="11" height="20" fill="#111"/><path d="M15 71H22M15 74H22M15 77H22M15 80H22" stroke="#777"/></svg>
<div style="left:314px;top:100px;width:1262px;height:617px;background:#d9d9e5"></div>
<div style="left:319px;top:129px;width:1257px;height:584px;background:#3a62a8"></div>
<div style="left:320px;top:129px;width:1255px;height:583px;background:#f5b35a"></div>
<div style="left:321px;top:129px;width:1253px;height:582px;background:#fff"></div>
<div style="left:321px;top:129px;width:147px;height:581px;background:linear-gradient(90deg,#6a6a6a 0,#6a6a6a 1px,#e6e6e6 2px,#eeeeee)"></div>
<div style="left:321px;top:709px;width:1253px;height:2px;background:#dadada"></div>
<div style="left:468px;top:129px;width:1px;height:580px;background:#000"></div>
<div style="left:1546px;top:129px;width:1px;height:580px;background:#000"></div>
<div style="left:1556px;top:129px;width:18px;height:580px;background:#ececec"></div>
<div style="left:1026px;top:104px;width:550px;height:25px;background:linear-gradient(#fbe9d2,#f8d3a0 60%,#f4bb70);border-bottom:2px solid #8a8a8a"></div>
<svg style="position:absolute;left:1026px;top:103px" width="60" height="26"><path d="M0 1H8L14 5L18 2H60" stroke="#3a64b4" stroke-width="1.5" fill="none"/><path d="M0 1H8L13 4.5L0 17Z" fill="#e8e8ef"/><path d="M13 5L0 17" stroke="#3a64b4" stroke-width="1.3"/></svg>
<svg style="position:absolute;left:1047px;top:108px" width="13" height="17" shape-rendering="crispEdges"><path d="M0.5 0.5H9L12.5 4V16.5H0.5Z" fill="#f4f4f8" stroke="#9a9aa8"/><path d="M2 8H5M8 8H11" stroke="#e01010" stroke-width="2"/><path d="M5 5V11M8 5V11" stroke="#e01010" stroke-width="1.5"/></svg>
<div style="left:1066px;top:107px;font-size:15px;font-weight:bold;color:#101030">[P</div>
<div style="left:1026px;top:357px;width:50px;height:1px;background:#000"></div>
<div style="left:1026px;top:521px;width:50px;height:1px;background:#000"></div>
<div style="left:495px;top:679px;font-size:12px;letter-spacing:-0.4px;color:#000">SM400</div>
<div style="left:505px;top:700px;width:1px;height:9px;background:#000"></div>
<div style="left:518px;top:700px;width:1px;height:9px;background:#000"></div>
<div style="left:321px;top:129px;width:1253px;height:580px;overflow:hidden"><div style="left:111px;top:574px;font-size:12px;color:#000;white-space:pre">(  49)</div><div style="left:954px;top:573px;font-size:12px;letter-spacing:-0.3px;color:#000">MOVP</div><div style="left:1033px;top:573px;font-size:12px;color:#000">K4</div><div style="left:1127px;top:573px;font-size:12px;color:#000">D610</div><div style="left:945px;top:574px;width:6px;height:8px;border-left:1px solid #000;border-top:1px solid #000"></div><div style="left:1217px;top:574px;width:6px;height:8px;border-right:1px solid #000;border-top:1px solid #000"></div></div>
<div style="left:0px;top:713px;width:1576px;height:4px;background:#d7d7e4"></div>
<div style="left:0px;top:717px;width:1576px;height:20px;background:linear-gradient(#f6f6fa,#e2e2ee)"></div>
<div style="left:8px;top:721px;font-size:13px;color:#000">输出</div>
<svg style="position:absolute;left:0;top:718px" width="4" height="19"><rect x="0" y="1" width="2" height="2" fill="#3a3a6a"/><rect x="0" y="4" width="2" height="2" fill="#3a3a6a"/><rect x="0" y="7" width="2" height="2" fill="#3a3a6a"/><rect x="0" y="10" width="2" height="2" fill="#3a3a6a"/><rect x="0" y="13" width="2" height="2" fill="#3a3a6a"/><rect x="0" y="16" width="2" height="2" fill="#3a3a6a"/></svg>
<svg style="position:absolute;left:1542px;top:721px" width="12" height="12" shape-rendering="crispEdges"><path d="M3 1H9M4 1V7M8 1V7M2 7H10M6 7V12" stroke="#000" stroke-width="1.2" fill="none"/><rect x="6" y="2" width="2" height="5" fill="#000"/></svg>
<svg style="position:absolute;left:1559px;top:722px" width="11" height="11"><path d="M1.5 1.5L9.5 9.5M9.5 1.5L1.5 9.5" stroke="#000" stroke-width="1.6"/></svg>
<div style="left:276px;top:51px;width:750px;height:623px;background:#f0f0f0;border-radius:8px;box-shadow:0 10px 34px rgba(0,0,0,0.30),0 2px 6px rgba(0,0,0,0.12);border:1px solid #a8a8a8;overflow:hidden">
</div>
<div style="left:280px;top:56px;font-size:12px;color:#808080;white-space:pre"><i style="width:12px">连</i><i style="width:12px">接</i><i style="width:12px">目</i><i style="width:12px">标</i><i style="width:12px">设</i><i style="width:12px">置</i> Connection1</div>
<svg style="position:absolute;left:1005px;top:58px" width="12" height="12"><path d="M0.5 0.5L11 11M11 0.5L0.5 11" stroke="#707070" stroke-width="1"/></svg>
<div style="left:276px;top:77px;width:68px;height:597px;background:#333;border-bottom-left-radius:8px"></div>
<div class="lbl" style="left:279px;top:86px"><i class="k11">计</i><i class="k11">算</i><i class="k11">机</i><i class="k11">侧</i>
I/F</div>
<div class="lbl" style="left:279px;top:171px"><i class="k11">可</i><i class="k11">编</i><i class="k11">程</i><i class="k11">控</i><i class="k11">制</i>
<i class="k11">器</i><i class="k11">侧</i> I/F</div>
<div class="lbl" style="left:279px;top:288px"><i class="k11">其</i><i class="k11">他</i><i class="k11">站</i><i class="k11">指</i>
<i class="k11">定</i></div>
<div class="lbl" style="left:279px;top:387px"><i class="k11">网</i><i class="k11">络</i>
<i class="k11">通</i><i class="k11">信</i><i class="k11">路</i><i class="k11">径</i></div>
<div class="lbl" style="left:279px;top:486px"><i class="k11">不</i><i class="k11">同</i><i class="k11">网</i><i class="k11">络</i>
<i class="k11">通</i><i class="k11">信</i><i class="k11">路</i><i class="k11">径</i></div>
<div class="lbl" style="left:279px;top:621px"><i class="k11">对</i><i class="k11">象</i><i class="k11">系</i><i class="k11">统</i></div>
<svg style="position:absolute;left:360px;top:78px" width="33" height="30" viewBox="0 0 33 30" shape-rendering="crispEdges"><rect width="33" height="30" fill="#c0c0c0"/><rect width="8" height="30" fill="#000"/><rect x="4" y="7" width="6" height="17" fill="#fff" stroke="#000"/><rect x="6" y="9" width="2" height="13" fill="#999"/><rect x="5" y="23" width="2" height="2" fill="#ff0"/><path d="M13 9H23Q28 9 28 14V20Q28 24 23 24H13Z" fill="#000"/><rect x="15" y="11" width="4" height="11" fill="#fff"/><rect x="16" y="13" width="2" height="7" fill="#000"/><rect x="28" y="16" width="5" height="2" fill="#000"/></svg>
<div class="t" style="left:358px;top:111px;text-decoration:underline;">Serial</div>
<div class="t" style="left:367px;top:122px;text-decoration:underline;">USB</div>
<svg style="position:absolute;left:439px;top:78px" width="33" height="30" viewBox="0 0 33 30" shape-rendering="crispEdges"><rect width="33" height="30" fill="#c0c0c0"/><rect x="0" y="0" width="12" height="30" fill="#008000"/><rect x="1" y="3" width="1" height="1" fill="#fff"/><rect x="4" y="3" width="1" height="1" fill="#fff"/><rect x="7" y="3" width="1" height="1" fill="#fff"/><rect x="1" y="7" width="3" height="3" fill="#000"/><rect x="2" y="12" width="5" height="4" fill="#fff"/><rect x="2" y="19" width="5" height="4" fill="#fff"/><rect x="1" y="25" width="6" height="2" fill="#000"/><rect x="10" y="6" width="5" height="24" fill="#fff"/><rect x="11" y="8" width="3" height="22" fill="#000"/><rect x="12" y="10" width="1" height="3" fill="#fff"/><rect x="12" y="16" width="1" height="3" fill="#fff"/><path d="M10 7L15 1L17 3L12 9Z" fill="#fff" stroke="#000" stroke-width="0.8" shape-rendering="auto"/><rect x="11" y="9" width="1" height="20" fill="#fff"/><rect x="1" y="14" width="4" height="4" fill="#ccc"/><rect x="1" y="21" width="4" height="4" fill="#ccc"/><path d="M18 14H24V22H18Z" fill="#000"/><rect x="15" y="16" width="3" height="1" fill="#000"/><rect x="15" y="19" width="3" height="1" fill="#000"/><path d="M24 18H29L31 20V22" stroke="#e00000" stroke-width="1.5" fill="none"/></svg>
<div class="t" style="left:426px;top:111px;text-decoration:underline;">CC IE Cont</div>
<div class="t" style="left:429px;top:122px;text-decoration:underline;">NET/10(H)</div>
<div class="t" style="left:441px;top:133px;text-decoration:underline;">Board</div>
<svg style="position:absolute;left:519px;top:78px" width="33" height="30" viewBox="0 0 33 30" shape-rendering="crispEdges"><rect width="33" height="30" fill="#c0c0c0"/><rect x="0" y="0" width="9" height="30" fill="#008000"/><rect x="1" y="3" width="1" height="1" fill="#fff"/><rect x="4" y="3" width="1" height="1" fill="#fff"/><rect x="7" y="3" width="1" height="1" fill="#fff"/><rect x="1" y="7" width="3" height="3" fill="#000"/><rect x="2" y="12" width="5" height="4" fill="#fff"/><rect x="2" y="19" width="5" height="4" fill="#fff"/><rect x="1" y="25" width="6" height="2" fill="#000"/><rect x="7" y="6" width="5" height="24" fill="#fff"/><rect x="8" y="8" width="3" height="22" fill="#000"/><rect x="9" y="10" width="1" height="3" fill="#fff"/><rect x="9" y="16" width="1" height="3" fill="#fff"/><path d="M7 7L12 1L14 3L9 9Z" fill="#fff" stroke="#000" stroke-width="0.8" shape-rendering="auto"/><rect x="10" y="20" width="13" height="3" fill="#0000c0"/><rect x="10" y="23" width="13" height="2" fill="#ffff00"/><rect x="10" y="25" width="13" height="2" fill="#fff"/><rect x="18" y="21" width="15" height="5" fill="#00e0e0"/><rect x="18" y="23" width="15" height="1" fill="#008080"/></svg>
<div class="t" style="left:514px;top:111px;text-decoration:underline;">CC-Link</div>
<div class="t" style="left:520px;top:122px;text-decoration:underline;">Board</div>
<svg style="position:absolute;left:598px;top:78px" width="33" height="30" viewBox="0 0 33 30" shape-rendering="crispEdges"><rect width="33" height="30" fill="#c0c0c0"/><rect x="13" width="20" height="30" fill="#ffff00"/><rect x="0" y="0" width="12" height="30" fill="#008000"/><rect x="1" y="3" width="1" height="1" fill="#fff"/><rect x="4" y="3" width="1" height="1" fill="#fff"/><rect x="7" y="3" width="1" height="1" fill="#fff"/><rect x="1" y="7" width="3" height="3" fill="#000"/><rect x="2" y="12" width="5" height="4" fill="#fff"/><rect x="2" y="19" width="5" height="4" fill="#fff"/><rect x="1" y="25" width="6" height="2" fill="#000"/><rect x="10" y="6" width="5" height="24" fill="#fff"/><rect x="11" y="8" width="3" height="22" fill="#000"/><rect x="12" y="10" width="1" height="3" fill="#fff"/><rect x="12" y="16" width="1" height="3" fill="#fff"/><path d="M10 7L15 1L17 3L12 9Z" fill="#fff" stroke="#000" stroke-width="0.8" shape-rendering="auto"/><rect x="17" y="16" width="6" height="3" fill="#999"/><rect x="23" y="15" width="3" height="5" fill="#000"/><path d="M26 17L32 22" stroke="#000" stroke-width="1.2"/><rect x="0" y="0" width="33" height="1" fill="#000"/><rect x="0" y="29" width="33" height="1" fill="#000"/><rect x="32" y="0" width="1" height="30" fill="#000"/></svg>
<div class="t" style="left:591px;top:111px;text-decoration:underline;">Ethernet</div>
<div class="t" style="left:600px;top:122px;text-decoration:underline;">Board</div>
<svg style="position:absolute;left:678px;top:78px" width="33" height="30" viewBox="0 0 33 30" shape-rendering="crispEdges"><rect width="33" height="30" fill="#c0c0c0"/><rect x="13" width="20" height="30" fill="#c0c0c0"/><rect x="0" y="0" width="12" height="30" fill="#008000"/><rect x="1" y="3" width="1" height="1" fill="#fff"/><rect x="4" y="3" width="1" height="1" fill="#fff"/><rect x="7" y="3" width="1" height="1" fill="#fff"/><rect x="1" y="7" width="3" height="3" fill="#000"/><rect x="2" y="12" width="5" height="4" fill="#fff"/><rect x="2" y="19" width="5" height="4" fill="#fff"/><rect x="1" y="25" width="6" height="2" fill="#000"/><rect x="10" y="6" width="5" height="24" fill="#fff"/><rect x="11" y="8" width="3" height="22" fill="#000"/><rect x="12" y="10" width="1" height="3" fill="#fff"/><rect x="12" y="16" width="1" height="3" fill="#fff"/><path d="M10 7L15 1L17 3L12 9Z" fill="#fff" stroke="#000" stroke-width="0.8" shape-rendering="auto"/><rect x="17" y="16" width="6" height="3" fill="#999"/><rect x="23" y="15" width="3" height="5" fill="#000"/><path d="M26 17L32 22" stroke="#000" stroke-width="1.2"/></svg>
<div class="t" style="left:661px;top:111px;text-decoration:underline;">CC IE Field</div>
<div class="t" style="left:679px;top:122px;text-decoration:underline;">Board</div>
<svg style="position:absolute;left:757px;top:78px" width="33" height="30" viewBox="0 0 33 30" shape-rendering="crispEdges"><rect width="33" height="30" fill="#c0c0c0"/><rect x="3" y="2" width="13" height="11" fill="#fff" stroke="#000"/><rect x="5" y="4" width="9" height="7" fill="#0000ff"/><rect x="6" y="5" width="2" height="2" fill="#8cf"/><rect x="2" y="15" width="10" height="2" fill="#000"/><path d="M16 9H22V16" stroke="#000" fill="none"/><path d="M8 17L11 14H31L31 27L28 30H8Z" fill="#000"/><rect x="7" y="17" width="6" height="13" fill="#ff0000"/><rect x="9" y="18" width="2" height="1" fill="#0f0"/><rect x="14" y="17" width="2" height="13" fill="#fff"/><rect x="18" y="17" width="6" height="13" fill="#999"/><rect x="20" y="20" width="1" height="2" fill="#f00"/><rect x="25" y="17" width="2" height="13" fill="#fff"/></svg>
<div class="t" style="left:750px;top:111px;">Q Series</div>
<div class="t" style="left:765px;top:122px;">Bus</div>
<svg style="position:absolute;left:837px;top:78px" width="33" height="30" viewBox="0 0 33 30" shape-rendering="crispEdges"><rect width="33" height="30" fill="#c0c0c0"/><rect width="33" height="1" fill="#fff"/><rect width="1" height="30" fill="#fff"/><rect x="32" width="1" height="30" fill="#000"/><rect y="29" width="33" height="1" fill="#000"/></svg>
<div class="t" style="left:832px;top:111px;">NET(II)</div>
<div class="t" style="left:838px;top:122px;">Board</div>
<svg style="position:absolute;left:916px;top:78px" width="33" height="30" viewBox="0 0 33 30" shape-rendering="crispEdges"><rect width="33" height="30" fill="#c0c0c0"/><rect width="33" height="1" fill="#fff"/><rect width="1" height="30" fill="#fff"/><rect x="32" width="1" height="30" fill="#000"/><rect y="29" width="33" height="1" fill="#000"/></svg>
<div class="t" style="left:924px;top:111px;">PLC</div>
<div class="t" style="left:918px;top:122px;">Board</div>
<svg style="position:absolute;left:363px;top:169px" width="33" height="30" viewBox="0 0 33 30" shape-rendering="crispEdges"><rect width="33" height="30" fill="#ffff00"/><rect width="33" height="1" fill="#fff"/><rect width="1" height="30" fill="#000"/><rect y="29" width="33" height="1" fill="#000"/><rect x="32" width="1" height="30" fill="#fff"/><path d="M7 4L9 2H24V26L21 29H7Z" fill="#000"/><path d="M8 4V29M8 4H21" stroke="#ccc" fill="none"/><rect x="10" y="7" width="4" height="1" fill="#fff"/><path d="M8 13H20M8 21H20" stroke="#ccc"/><rect x="20" y="13" width="2" height="2" fill="#fff"/><rect x="20" y="19" width="2" height="2" fill="#fff"/><rect x="15" y="24" width="1" height="4" fill="#ccc"/></svg>
<div class="t" style="left:370px;top:200px;text-decoration:underline;">PLC</div>
<div class="t" style="left:362px;top:211px;text-decoration:underline;">Module</div>
<svg style="position:absolute;left:439px;top:169px" width="33" height="30" viewBox="0 0 33 30" shape-rendering="crispEdges"><rect width="33" height="30" fill="#c0c0c0"/><rect width="33" height="1" fill="#fff"/><rect width="1" height="30" fill="#fff"/><rect x="32" width="1" height="30" fill="#000"/><rect y="29" width="33" height="1" fill="#000"/></svg>
<div class="t" style="left:426px;top:200px;">CC IE Cont</div>
<div class="t" style="left:429px;top:211px;">NET/10(H)</div>
<div class="t" style="left:438px;top:222px;">Module</div>
<svg style="position:absolute;left:519px;top:169px" width="33" height="30" viewBox="0 0 33 30" shape-rendering="crispEdges"><rect width="33" height="30" fill="#c0c0c0"/><rect width="33" height="1" fill="#fff"/><rect width="1" height="30" fill="#fff"/><rect x="32" width="1" height="30" fill="#000"/><rect y="29" width="33" height="1" fill="#000"/></svg>
<div class="t" style="left:514px;top:200px;">CC-Link</div>
<div class="t" style="left:517px;top:211px;">Module</div>
<svg style="position:absolute;left:598px;top:169px" width="33" height="30" viewBox="0 0 33 30" shape-rendering="crispEdges"><rect width="33" height="30" fill="#c0c0c0"/><path d="M11 4L13 2H20V27L18 29H11Z" fill="#000"/><path d="M12 4H18M12 4V12" stroke="#fff" fill="none"/><rect x="14" y="6" width="1" height="1" fill="#f00"/><rect x="15" y="8" width="1" height="1" fill="#f00"/><rect x="13" y="13" width="2" height="1" fill="#f00"/><rect x="13" y="16" width="3" height="7" fill="#fff"/><rect x="14" y="17" width="1" height="5" fill="#000"/><rect x="13" y="24" width="4" height="4" fill="#fff"/></svg>
<div class="t" style="left:591px;top:200px;text-decoration:underline;">Ethernet</div>
<div class="t" style="left:597px;top:211px;text-decoration:underline;">Module</div>
<svg style="position:absolute;left:678px;top:169px" width="33" height="30" viewBox="0 0 33 30" shape-rendering="crispEdges"><rect width="33" height="30" fill="#c0c0c0"/><rect width="33" height="1" fill="#fff"/><rect width="1" height="30" fill="#fff"/><rect x="32" width="1" height="30" fill="#000"/><rect y="29" width="33" height="1" fill="#000"/></svg>
<div class="t" style="left:685px;top:200px;">C24</div>
<svg style="position:absolute;left:757px;top:169px" width="33" height="30" viewBox="0 0 33 30" shape-rendering="crispEdges"><rect width="33" height="30" fill="#c0c0c0"/><rect x="3" y="5" width="27" height="19" fill="#000"/><rect x="4" y="6" width="25" height="17" fill="#888"/><rect x="6" y="8" width="21" height="13" fill="#000"/><rect x="7" y="9" width="19" height="11" fill="#fff"/><path d="M9 11H14M16 11H24M9 14H12M14 14H17M20 14H24M9 17H24" stroke="#777"/><rect x="8" y="15" width="3" height="3" fill="#1040a0"/></svg>
<div class="t" style="left:765px;top:200px;text-decoration:underline;">GOT</div>
<svg style="position:absolute;left:837px;top:169px" width="33" height="30" viewBox="0 0 33 30" shape-rendering="crispEdges"><rect width="33" height="30" fill="#c0c0c0"/><rect width="33" height="1" fill="#fff"/><rect width="1" height="30" fill="#fff"/><rect x="32" width="1" height="30" fill="#000"/><rect y="29" width="33" height="1" fill="#000"/></svg>
<div class="t" style="left:820px;top:200px;">CC IE Field</div>
<div class="t" style="left:817px;top:211px;">Master/Local</div>
<div class="t" style="left:835px;top:222px;">Module</div>
<svg style="position:absolute;left:916px;top:169px" width="33" height="30" viewBox="0 0 33 30" shape-rendering="crispEdges"><rect width="33" height="30" fill="#c0c0c0"/><rect width="33" height="1" fill="#fff"/><rect width="1" height="30" fill="#fff"/><rect x="32" width="1" height="30" fill="#000"/><rect y="29" width="33" height="1" fill="#000"/></svg>
<div class="t" style="left:900px;top:200px;">Head Module</div>
<div style="left:984px;top:127px;width:13px;height:14px;background:#f0f0f0;border:1px solid #b0b0b0"></div>
<div style="left:998px;top:127px;width:13px;height:14px;background:#f0f0f0;border:1px solid #808080"></div>
<div style="left:987px;top:130px;width:0;height:0;border-right:4px solid #a0a0a0;border-top:4px solid transparent;border-bottom:4px solid transparent"></div>
<div style="left:1002px;top:130px;width:0;height:0;border-left:4px solid #000;border-top:4px solid transparent;border-bottom:4px solid transparent"></div>
<div style="left:984px;top:219px;width:13px;height:14px;background:#f0f0f0;border:1px solid #b0b0b0"></div>
<div style="left:998px;top:219px;width:13px;height:14px;background:#f0f0f0;border:1px solid #808080"></div>
<div style="left:987px;top:222px;width:0;height:0;border-right:4px solid #a0a0a0;border-top:4px solid transparent;border-bottom:4px solid transparent"></div>
<div style="left:1002px;top:222px;width:0;height:0;border-left:4px solid #000;border-top:4px solid transparent;border-bottom:4px solid transparent"></div>
<div class="gbox" style="left:353px;top:145px;width:628px;height:20px;"></div>
<div class="t" style="left:386px;top:150px;">IP<i class="k11">地</i><i class="k11">址</i></div>
<div class="inp" style="left:431px;top:147px;width:104px;height:16px;"></div>
<div class="t" style="left:434px;top:150px;">192.168.2.59</div>
<div class="t" style="left:557px;top:150px;"><i class="k11">网</i><i class="k11">络</i><i class="k11">号</i></div>
<div class="inp" style="left:599px;top:147px;width:26px;height:16px;"></div>
<div class="t" style="left:602px;top:150px;">-</div>
<div class="t" style="left:635px;top:150px;"><i class="k11">站</i><i class="k11">号</i></div>
<div class="inp" style="left:665px;top:147px;width:26px;height:16px;"></div>
<div class="t" style="left:668px;top:150px;">-</div>
<div class="t" style="left:699px;top:150px;"><i class="k11">协</i><i class="k11">议</i></div>
<div class="inp" style="left:740px;top:147px;width:41px;height:16px;"></div>
<div class="t" style="left:743px;top:150px;">UDP</div>
<div class="gbox" style="left:353px;top:235px;width:628px;height:41px;"></div>
<div class="t" style="left:737px;top:240px;">CPU<i class="k11">模</i><i class="k11">式</i></div>
<div class="inp" style="left:788px;top:238px;width:154px;height:15px;"></div>
<div class="t" style="left:791px;top:240px;">QCPU(Q<i class="k11">模</i><i class="k11">式</i>)</div>
<div class="t" style="left:358px;top:259px;">IP<i class="k11">地</i><i class="k11">址</i>/<i class="k11">主</i><i class="k11">机</i><i class="k11">名</i></div>
<div class="inp" style="left:440px;top:256px;width:145px;height:16px;"></div>
<div class="t" style="left:444px;top:259px;"><i class="k11">以</i><i class="k11">太</i><i class="k11">网</i><i class="k11">端</i><i class="k11">口</i><i class="k11">直</i><i class="k11">接</i><i class="k11">连</i><i class="k11">接</i></div>
<svg style="position:absolute;left:360px;top:281px" width="33" height="30" viewBox="0 0 33 30" shape-rendering="crispEdges"><rect width="33" height="30" fill="#ffff00"/><rect width="33" height="1" fill="#fff"/><rect width="1" height="30" fill="#000"/><rect x="32" width="1" height="30" fill="#fff"/><rect y="29" width="33" height="1" fill="#fff"/><rect x="9" y="2" width="12" height="9" fill="#fff" stroke="#000"/><rect x="11" y="4" width="8" height="5" fill="#0000e0"/><rect x="9" y="12" width="13" height="3" fill="#aaa" stroke="#333"/><path d="M22 13H28V27H22" stroke="#000" fill="none"/><rect x="7" y="20" width="15" height="9" fill="#000"/><rect x="7" y="21" width="3" height="8" fill="#e00000"/><rect x="8" y="20" width="14" height="1" fill="#c03030"/><rect x="11" y="23" width="9" height="5" fill="#fff"/><rect x="13" y="23" width="1" height="5" fill="#000"/><rect x="15" y="23" width="1" height="5" fill="#000"/></svg>
<svg style="position:absolute;left:498px;top:281px" width="33" height="30" viewBox="0 0 33 30" shape-rendering="crispEdges"><rect width="33" height="30" fill="#c0c0c0"/><path d="M10 6Q2 6 2 14V24M23 6Q31 6 31 14V24M12 25H22" stroke="#000" fill="none" shape-rendering="auto"/><rect x="10" y="3" width="13" height="7" fill="#000"/><rect x="10" y="4" width="3" height="6" fill="#e00000"/><rect x="11" y="3" width="12" height="1" fill="#c03030"/><rect x="14" y="6" width="7" height="3" fill="#fff"/><rect x="16" y="6" width="1" height="3" fill="#000"/><rect x="18" y="6" width="1" height="3" fill="#000"/><rect x="1" y="20" width="12" height="8" fill="#000"/><rect x="1" y="21" width="3" height="7" fill="#e00000"/><rect x="2" y="20" width="11" height="1" fill="#c03030"/><rect x="5" y="23" width="6" height="4" fill="#fff"/><rect x="7" y="23" width="1" height="4" fill="#000"/><rect x="9" y="23" width="1" height="4" fill="#000"/><rect x="20" y="20" width="12" height="8" fill="#000"/><rect x="20" y="21" width="3" height="7" fill="#e00000"/><rect x="21" y="20" width="11" height="1" fill="#c03030"/><rect x="24" y="23" width="6" height="4" fill="#fff"/><rect x="26" y="23" width="1" height="4" fill="#000"/><rect x="28" y="23" width="1" height="4" fill="#000"/></svg>
<svg style="position:absolute;left:633px;top:281px" width="33" height="30" viewBox="0 0 33 30" shape-rendering="crispEdges"><rect width="33" height="30" fill="#c0c0c0"/><ellipse cx="16.5" cy="9" rx="14.5" ry="5" stroke="#000" fill="none" shape-rendering="auto"/><rect x="9" y="1" width="14" height="6" fill="#000"/><rect x="9" y="2" width="3" height="5" fill="#e00000"/><rect x="10" y="1" width="13" height="1" fill="#c03030"/><rect x="13" y="4" width="8" height="2" fill="#fff"/><rect x="15" y="4" width="1" height="2" fill="#000"/><rect x="17" y="4" width="1" height="2" fill="#000"/><rect x="9" y="10" width="14" height="7" fill="#000"/><rect x="9" y="11" width="3" height="6" fill="#e00000"/><rect x="10" y="10" width="13" height="1" fill="#c03030"/><rect x="13" y="13" width="8" height="3" fill="#fff"/><rect x="15" y="13" width="1" height="3" fill="#000"/><rect x="17" y="13" width="1" height="3" fill="#000"/><path d="M16 17V20M4 20H29M6 20V23M26 20V23" stroke="#000"/><rect x="1" y="22" width="12" height="8" fill="#000"/><rect x="1" y="23" width="3" height="7" fill="#e00000"/><rect x="2" y="22" width="11" height="1" fill="#c03030"/><rect x="5" y="25" width="6" height="4" fill="#fff"/><rect x="7" y="25" width="1" height="4" fill="#000"/><rect x="9" y="25" width="1" height="4" fill="#000"/><rect x="20" y="22" width="12" height="8" fill="#000"/><rect x="20" y="23" width="3" height="7" fill="#e00000"/><rect x="21" y="22" width="11" height="1" fill="#c03030"/><rect x="24" y="25" width="6" height="4" fill="#fff"/><rect x="26" y="25" width="1" height="4" fill="#000"/><rect x="28" y="25" width="1" height="4" fill="#000"/></svg>
<div class="t" style="left:351px;top:313px;text-decoration:underline">No Specification</div>
<div class="t" style="left:486px;top:313px;text-decoration:underline">Other Station
(Single Network)</div>
<div class="t" style="left:621px;top:313px;text-decoration:underline">Other Station
(Co-existence Network)</div>
<div class="gbox" style="left:353px;top:339px;width:374px;height:38px;"></div>
<div class="t" style="left:375px;top:360px;"><i class="k11">时</i><i class="k11">间</i><i class="k11">检</i><i class="k11">查</i>(<i class="k11">秒</i>)</div>
<div class="inp" style="left:450px;top:356px;width:34px;height:16px;"></div>
<div class="t" style="left:453px;top:359px;">30</div>
<div class="t" style="left:512px;top:360px;"><i class="k11">重</i><i class="k11">试</i><i class="k11">次</i><i class="k11">数</i></div>
<div class="inp" style="left:569px;top:356px;width:32px;height:16px;"></div>
<div class="t" style="left:572px;top:359px;">0</div>
<svg style="position:absolute;left:360px;top:384px" width="33" height="30" viewBox="0 0 33 30" shape-rendering="crispEdges"><rect width="33" height="30" fill="#c0c0c0"/><rect width="33" height="1" fill="#fff"/><rect width="1" height="30" fill="#fff"/><rect x="32" width="1" height="30" fill="#000"/><rect y="29" width="33" height="1" fill="#000"/></svg>
<svg style="position:absolute;left:437px;top:384px" width="33" height="30" viewBox="0 0 33 30" shape-rendering="crispEdges"><rect width="33" height="30" fill="#c0c0c0"/><rect width="33" height="1" fill="#fff"/><rect width="1" height="30" fill="#fff"/><rect x="32" width="1" height="30" fill="#000"/><rect y="29" width="33" height="1" fill="#000"/></svg>
<svg style="position:absolute;left:509px;top:384px" width="33" height="30" viewBox="0 0 33 30" shape-rendering="crispEdges"><rect width="33" height="30" fill="#c0c0c0"/><rect width="33" height="1" fill="#fff"/><rect width="1" height="30" fill="#fff"/><rect x="32" width="1" height="30" fill="#000"/><rect y="29" width="33" height="1" fill="#000"/></svg>
<svg style="position:absolute;left:584px;top:384px" width="33" height="30" viewBox="0 0 33 30" shape-rendering="crispEdges"><rect width="33" height="30" fill="#c0c0c0"/><rect width="33" height="1" fill="#fff"/><rect width="1" height="30" fill="#fff"/><rect x="32" width="1" height="30" fill="#000"/><rect y="29" width="33" height="1" fill="#000"/></svg>
<svg style="position:absolute;left:659px;top:384px" width="33" height="30" viewBox="0 0 33 30" shape-rendering="crispEdges"><rect width="33" height="30" fill="#c0c0c0"/><rect width="33" height="1" fill="#fff"/><rect width="1" height="30" fill="#fff"/><rect x="32" width="1" height="30" fill="#000"/><rect y="29" width="33" height="1" fill="#000"/></svg>
<svg style="position:absolute;left:360px;top:483px" width="33" height="30" viewBox="0 0 33 30" shape-rendering="crispEdges"><rect width="33" height="30" fill="#c0c0c0"/><rect width="33" height="1" fill="#fff"/><rect width="1" height="30" fill="#fff"/><rect x="32" width="1" height="30" fill="#000"/><rect y="29" width="33" height="1" fill="#000"/></svg>
<svg style="position:absolute;left:437px;top:483px" width="33" height="30" viewBox="0 0 33 30" shape-rendering="crispEdges"><rect width="33" height="30" fill="#c0c0c0"/><rect width="33" height="1" fill="#fff"/><rect width="1" height="30" fill="#fff"/><rect x="32" width="1" height="30" fill="#000"/><rect y="29" width="33" height="1" fill="#000"/></svg>
<svg style="position:absolute;left:509px;top:483px" width="33" height="30" viewBox="0 0 33 30" shape-rendering="crispEdges"><rect width="33" height="30" fill="#c0c0c0"/><rect width="33" height="1" fill="#fff"/><rect width="1" height="30" fill="#fff"/><rect x="32" width="1" height="30" fill="#000"/><rect y="29" width="33" height="1" fill="#000"/></svg>
<svg style="position:absolute;left:584px;top:483px" width="33" height="30" viewBox="0 0 33 30" shape-rendering="crispEdges"><rect width="33" height="30" fill="#c0c0c0"/><rect width="33" height="1" fill="#fff"/><rect width="1" height="30" fill="#fff"/><rect x="32" width="1" height="30" fill="#000"/><rect y="29" width="33" height="1" fill="#000"/></svg>
<svg style="position:absolute;left:659px;top:483px" width="33" height="30" viewBox="0 0 33 30" shape-rendering="crispEdges"><rect width="33" height="30" fill="#c0c0c0"/><rect width="33" height="1" fill="#fff"/><rect width="1" height="30" fill="#fff"/><rect x="32" width="1" height="30" fill="#000"/><rect y="29" width="33" height="1" fill="#000"/></svg>
<div class="t" style="left:354px;top:415px;">CC IE Cont</div>
<div class="t" style="left:357px;top:426px;">NET/10(H)</div>
<div class="t" style="left:437px;top:415px;">CC IE</div>
<div class="t" style="left:437px;top:426px;">Field</div>
<div class="t" style="left:503px;top:415px;">Ethernet</div>
<div class="t" style="left:581px;top:415px;">CC-Link</div>
<div class="t" style="left:668px;top:415px;">C24</div>
<div class="t" style="left:354px;top:514px;">CC IE Cont</div>
<div class="t" style="left:357px;top:525px;">NET/10(H)</div>
<div class="t" style="left:437px;top:514px;">CC IE</div>
<div class="t" style="left:437px;top:525px;">Field</div>
<div class="t" style="left:503px;top:514px;">Ethernet</div>
<div class="t" style="left:581px;top:514px;">CC-Link</div>
<div class="t" style="left:668px;top:514px;">C24</div>
<div class="gbox" style="left:353px;top:441px;width:374px;height:38px;"></div>
<div class="gbox" style="left:353px;top:540px;width:374px;height:38px;"></div>
<div class="t" style="left:366px;top:545px;"><i class="k11">本</i><i class="k11">站</i><i class="k11">访</i><i class="k11">问</i><i class="k11">中</i><i class="k11">。</i></div>
<div style="left:741px;top:436px;width:13px;height:14px;background:#f0f0f0;border:1px solid #b0b0b0"></div>
<div style="left:755px;top:436px;width:13px;height:14px;background:#f0f0f0;border:1px solid #808080"></div>
<div style="left:744px;top:439px;width:0;height:0;border-right:4px solid #a0a0a0;border-top:4px solid transparent;border-bottom:4px solid transparent"></div>
<div style="left:759px;top:439px;width:0;height:0;border-left:4px solid #000;border-top:4px solid transparent;border-bottom:4px solid transparent"></div>
<div style="left:741px;top:535px;width:13px;height:14px;background:#f0f0f0;border:1px solid #b0b0b0"></div>
<div style="left:755px;top:535px;width:13px;height:14px;background:#f0f0f0;border:1px solid #808080"></div>
<div style="left:744px;top:538px;width:0;height:0;border-right:4px solid #a0a0a0;border-top:4px solid transparent;border-bottom:4px solid transparent"></div>
<div style="left:759px;top:538px;width:0;height:0;border-left:4px solid #000;border-top:4px solid transparent;border-bottom:4px solid transparent"></div>
<div class="btn" style="left:780px;top:282px;width:201px;height:28px;"></div>
<div class="t" style="left:780px;top:290px;width:201px;text-align:center"><i class="k11">连</i><i class="k11">接</i><i class="k11">路</i><i class="k11">径</i><i class="k11">一</i><i class="k11">览</i>(L)...</div>
<div class="btn" style="left:780px;top:312px;width:201px;height:27px;"></div>
<div class="t" style="left:780px;top:319px;width:201px;text-align:center"><i class="k11">可</i><i class="k11">编</i><i class="k11">程</i><i class="k11">控</i><i class="k11">制</i><i class="k11">器</i><i class="k11">直</i><i class="k11">接</i><i class="k11">连</i><i class="k11">接</i><i class="k11">设</i><i class="k11">置</i>(D)</div>
<div class="btn" style="left:780px;top:342px;width:201px;height:27px;"></div>
<div class="t" style="left:780px;top:349px;width:201px;text-align:center"><i class="k11">通</i><i class="k11">信</i><i class="k11">测</i><i class="k11">试</i>(T)</div>
<div class="t" style="left:809px;top:378px;">CPU<i class="k11">型</i><i class="k11">号</i></div>
<div class="inp" style="left:879px;top:374px;width:100px;height:18px;"></div>
<div class="t" style="left:809px;top:399px;"><i class="k11">详</i><i class="k11">细</i></div>
<div class="inp" style="left:879px;top:397px;width:100px;height:17px;"></div>
<div class="btn" style="left:780px;top:419px;width:201px;height:27px;"></div>
<div class="t" style="left:780px;top:426px;width:201px;text-align:center"><i class="k11">系</i><i class="k11">统</i><i class="k11">图</i><i class="k11">像</i>(G)...</div>
<div class="btn" style="left:780px;top:449px;width:201px;height:27px;"></div>
<div class="t" style="left:780px;top:456px;width:201px;text-align:center"><i class="k11">电</i><i class="k11">话</i><i class="k11">线</i><i class="k11">路</i><i class="k11">连</i><i class="k11">接</i>(C24)(C)...</div>
<div class="btn" style="left:780px;top:481px;width:201px;height:28px;"></div>
<div class="t" style="left:780px;top:489px;width:201px;text-align:center"><i class="k11">确</i><i class="k11">定</i></div>
<div class="btn" style="left:780px;top:513px;width:201px;height:29px;"></div>
<div class="t" style="left:780px;top:521px;width:201px;text-align:center"><i class="k11">取</i><i class="k11">消</i></div>
<div class="gbox" style="left:353px;top:595px;width:233px;height:60px;"></div>
<div class="t" style="left:360px;top:590px;background:#f0f0f0;padding:0 1px"><i class="k11">多</i>CPU<i class="k11">指</i><i class="k11">定</i></div>
<svg style="position:absolute;left:365px;top:604px" width="23" height="29" viewBox="0 0 23 29" shape-rendering="crispEdges"><rect width="23" height="29" fill="#c8c8c8"/><path d="M4 5L8 2H19V25L16 28H4Z" fill="#000"/><rect x="5" y="5" width="11" height="23" fill="#e8e8e8"/><rect x="6" y="6" width="9" height="21" fill="#222"/><rect x="10" y="9" width="2" height="1" fill="#0c0"/><path d="M7 16H14M7 19H14M7 22H14M7 25H14" stroke="#bbb"/></svg>
<div class="t" style="left:374px;top:641px;">1</div>
<svg style="position:absolute;left:392px;top:604px" width="23" height="29" viewBox="0 0 23 29" shape-rendering="crispEdges"><rect width="23" height="29" fill="#c8c8c8"/><path d="M4 5L8 2H19V25L16 28H4Z" fill="#000"/><rect x="5" y="5" width="11" height="23" fill="#e8e8e8"/><rect x="6" y="6" width="9" height="21" fill="#222"/><rect x="10" y="9" width="2" height="1" fill="#0c0"/><path d="M7 16H14M7 19H14M7 22H14M7 25H14" stroke="#bbb"/></svg>
<div class="t" style="left:401px;top:641px;">2</div>
<svg style="position:absolute;left:419px;top:604px" width="23" height="29" viewBox="0 0 23 29" shape-rendering="crispEdges"><rect width="23" height="29" fill="#c8c8c8"/><path d="M4 5L8 2H19V25L16 28H4Z" fill="#000"/><rect x="5" y="5" width="11" height="23" fill="#e8e8e8"/><rect x="6" y="6" width="9" height="21" fill="#222"/><rect x="10" y="9" width="2" height="1" fill="#0c0"/><path d="M7 16H14M7 19H14M7 22H14M7 25H14" stroke="#bbb"/></svg>
<div class="t" style="left:428px;top:641px;">3</div>
<svg style="position:absolute;left:446px;top:604px" width="23" height="29" viewBox="0 0 23 29" shape-rendering="crispEdges"><rect width="23" height="29" fill="#c8c8c8"/><path d="M4 5L8 2H19V25L16 28H4Z" fill="#000"/><rect x="5" y="5" width="11" height="23" fill="#e8e8e8"/><rect x="6" y="6" width="9" height="21" fill="#222"/><rect x="10" y="9" width="2" height="1" fill="#0c0"/><path d="M7 16H14M7 19H14M7 22H14M7 25H14" stroke="#bbb"/></svg>
<div class="t" style="left:455px;top:641px;">4</div>
<div class="t" style="left:480px;top:611px;"><i class="k11">对</i><i class="k11">象</i>CPU</div>
<div class="inp" style="left:494px;top:628px;width:74px;height:16px;"></div>
<div class="t" style="left:497px;top:630px;"><i class="k11">无</i><i class="k11">指</i><i class="k11">定</i></div>
<div class="gbox" style="left:604px;top:595px;width:123px;height:60px;"></div>
<div class="t" style="left:610px;top:590px;background:#f0f0f0;padding:0 1px;color:#909090"><i class="k11">冗</i><i class="k11">余</i>CPU<i class="k11">指</i><i class="k11">定</i></div>
<div style="left:613px;top:618px;width:103px;height:17px;background:#f0f0f0;border:1px solid #a0a0a0"></div>
<div style="left:698px;top:619px;width:17px;height:15px;background:#f6f6f6;border-left:1px solid #c0c0c0"></div>
<div style="left:703px;top:625px;width:0;height:0;border-top:4px solid #a0a0a0;border-left:3px solid transparent;border-right:3px solid transparent"></div>
<div style="left:1076px;top:35px;width:700px;height:510px;border-radius:8px 0 0 8px;box-shadow:0 12px 44px rgba(0,0,0,0.42),0 3px 10px rgba(0,0,0,0.2);background:#0c0c0c;overflow:hidden"></div>
<div style="left:1076px;top:35px;width:664px;height:31px;background:#eef2f9;border-radius:8px 0 0 0;border-top:1px solid #d8dce4;border-left:1px solid #d8dce4"></div>
<div style="left:1085px;top:44px;width:15px;height:12px;background:#000;border:1px solid #777"></div>
<div style="left:1086px;top:45px;font-size:7px;color:#fff;font-family:'Liberation Mono',monospace">C:\</div>
<div style="left:1106px;top:44px;font-size:12px;color:#000;white-space:pre"><i style="width:12px">管</i><i style="width:12px">理</i><i style="width:12px">员</i>: C:\Windows\system32\cmd.exe - ping  192.168.2.199 -t</div>
<div style="left:1076px;top:66px;width:664px;height:479px;overflow:hidden">
<div class="cmd" style="left:0;top:1px">    <i class="k16">数</i><i class="k16">据</i><i class="k16">包</i>: <i class="k16">已</i><i class="k16">发</i><i class="k16">送</i> = 2<i class="k16">，</i><i class="k16">已</i><i class="k16">接</i><i class="k16">收</i> = 2<i class="k16">，</i><i class="k16">丢</i><i class="k16">失</i> = 0 (0% <i class="k16">丢</i><i class="k16">失</i>)<i class="k16">，</i></div>
<div class="cmd" style="left:0;top:17px"><i class="k16">往</i><i class="k16">返</i><i class="k16">行</i><i class="k16">程</i><i class="k16">的</i><i class="k16">估</i><i class="k16">计</i><i class="k16">时</i><i class="k16">间</i>(<i class="k16">以</i><i class="k16">毫</i><i class="k16">秒</i><i class="k16">为</i><i class="k16">单</i><i class="k16">位</i>):</div>
<div class="cmd" style="left:0;top:33px">    <i class="k16">最</i><i class="k16">短</i> = 81ms<i class="k16">，</i><i class="k16">最</i><i class="k16">长</i> = 87ms<i class="k16">，</i><i class="k16">平</i><i class="k16">均</i> = 84ms</div>
<div class="cmd" style="left:0;top:49px">Control-C</div>
<div class="cmd" style="left:0;top:65px">^C</div>
<div class="cmd" style="left:0;top:81px">C:\Users\Administrator&gt;ping 192.168.2.199 -t</div>
<div class="cmd" style="left:0;top:97px"></div>
<div class="cmd" style="left:0;top:113px"><i class="k16">正</i><i class="k16">在</i> Ping 192.168.2.199 <i class="k16">具</i><i class="k16">有</i> 32 <i class="k16">字</i><i class="k16">节</i><i class="k16">的</i><i class="k16">数</i><i class="k16">据</i>:</div>
<div class="cmd" style="left:0;top:129px"><i class="k16">来</i><i class="k16">自</i> 192.168.2.199 <i class="k16">的</i><i class="k16">回</i><i class="k16">复</i>: <i class="k16">字</i><i class="k16">节</i>=32 <i class="k16">时</i><i class="k16">间</i>=89ms TTL=63</div>
<div class="cmd" style="left:0;top:145px"><i class="k16">来</i><i class="k16">自</i> 192.168.2.199 <i class="k16">的</i><i class="k16">回</i><i class="k16">复</i>: <i class="k16">字</i><i class="k16">节</i>=32 <i class="k16">时</i><i class="k16">间</i>=82ms TTL=63</div>
<div class="cmd" style="left:0;top:161px"><i class="k16">来</i><i class="k16">自</i> 192.168.2.199 <i class="k16">的</i><i class="k16">回</i><i class="k16">复</i>: <i class="k16">字</i><i class="k16">节</i>=32 <i class="k16">时</i><i class="k16">间</i>=102ms TTL=63</div>
<div class="cmd" style="left:0;top:177px"><i class="k16">来</i><i class="k16">自</i> 192.168.2.199 <i class="k16">的</i><i class="k16">回</i><i class="k16">复</i>: <i class="k16">字</i><i class="k16">节</i>=32 <i class="k16">时</i><i class="k16">间</i>=77ms TTL=63</div>
<div class="cmd" style="left:0;top:193px"></div>
<div class="cmd" style="left:0;top:209px">192.168.2.199 <i class="k16">的</i> Ping <i class="k16">统</i><i class="k16">计</i><i class="k16">信</i><i class="k16">息</i>:</div>
<div class="cmd" style="left:0;top:225px">    <i class="k16">数</i><i class="k16">据</i><i class="k16">包</i>: <i class="k16">已</i><i class="k16">发</i><i class="k16">送</i> = 4<i class="k16">，</i><i class="k16">已</i><i class="k16">接</i><i class="k16">收</i> = 4<i class="k16">，</i><i class="k16">丢</i><i class="k16">失</i> = 0 (0% <i class="k16">丢</i><i class="k16">失</i>)<i class="k16">，</i></div>
<div class="cmd" style="left:0;top:241px"><i class="k16">往</i><i class="k16">返</i><i class="k16">行</i><i class="k16">程</i><i class="k16">的</i><i class="k16">估</i><i class="k16">计</i><i class="k16">时</i><i class="k16">间</i>(<i class="k16">以</i><i class="k16">毫</i><i class="k16">秒</i><i class="k16">为</i><i class="k16">单</i><i class="k16">位</i>):</div>
<div class="cmd" style="left:0;top:257px">    <i class="k16">最</i><i class="k16">短</i> = 77ms<i class="k16">，</i><i class="k16">最</i><i class="k16">长</i> = 102ms<i class="k16">，</i><i class="k16">平</i><i class="k16">均</i> = 87ms</div>
<div class="cmd" style="left:0;top:273px">Control-C</div>
<div class="cmd" style="left:0;top:289px">^C</div>
<div class="cmd" style="left:0;top:305px">C:\Users\Administrator&gt;ping 192.168.2.199 -t</div>
<div class="cmd" style="left:0;top:321px"></div>
<div class="cmd" style="left:0;top:337px"><i class="k16">正</i><i class="k16">在</i> Ping 192.168.2.199 <i class="k16">具</i><i class="k16">有</i> 32 <i class="k16">字</i><i class="k16">节</i><i class="k16">的</i><i class="k16">数</i><i class="k16">据</i>:</div>
<div class="cmd" style="left:0;top:353px"><i class="k16">来</i><i class="k16">自</i> 192.168.2.199 <i class="k16">的</i><i class="k16">回</i><i class="k16">复</i>: <i class="k16">字</i><i class="k16">节</i>=32 <i class="k16">时</i><i class="k16">间</i>=474ms TTL=63</div>
<div class="cmd" style="left:0;top:369px"><i class="k16">来</i><i class="k16">自</i> 192.168.2.199 <i class="k16">的</i><i class="k16">回</i><i class="k16">复</i>: <i class="k16">字</i><i class="k16">节</i>=32 <i class="k16">时</i><i class="k16">间</i>=390ms TTL=63</div>
<div class="cmd" style="left:0;top:385px"><i class="k16">来</i><i class="k16">自</i> 192.168.2.199 <i class="k16">的</i><i class="k16">回</i><i class="k16">复</i>: <i class="k16">字</i><i class="k16">节</i>=32 <i class="k16">时</i><i class="k16">间</i>=325ms TTL=63</div>
<div class="cmd" style="left:0;top:401px"><i class="k16">来</i><i class="k16">自</i> 192.168.2.199 <i class="k16">的</i><i class="k16">回</i><i class="k16">复</i>: <i class="k16">字</i><i class="k16">节</i>=32 <i class="k16">时</i><i class="k16">间</i>=93ms TTL=63</div>
<div class="cmd" style="left:0;top:417px"><i class="k16">来</i><i class="k16">自</i> 192.168.2.199 <i class="k16">的</i><i class="k16">回</i><i class="k16">复</i>: <i class="k16">字</i><i class="k16">节</i>=32 <i class="k16">时</i><i class="k16">间</i>=428ms TTL=63</div>
<div class="cmd" style="left:0;top:433px"><i class="k16">来</i><i class="k16">自</i> 192.168.2.199 <i class="k16">的</i><i class="k16">回</i><i class="k16">复</i>: <i class="k16">字</i><i class="k16">节</i>=32 <i class="k16">时</i><i class="k16">间</i>=139ms TTL=63</div>
<div class="cmd" style="left:0;top:449px"><i class="k16">来</i><i class="k16">自</i> 192.168.2.199 <i class="k16">的</i><i class="k16">回</i><i class="k16">复</i>: <i class="k16">字</i><i class="k16">节</i>=32 <i class="k16">时</i><i class="k16">间</i>=99ms TTL=63</div>
</div></body></html>
